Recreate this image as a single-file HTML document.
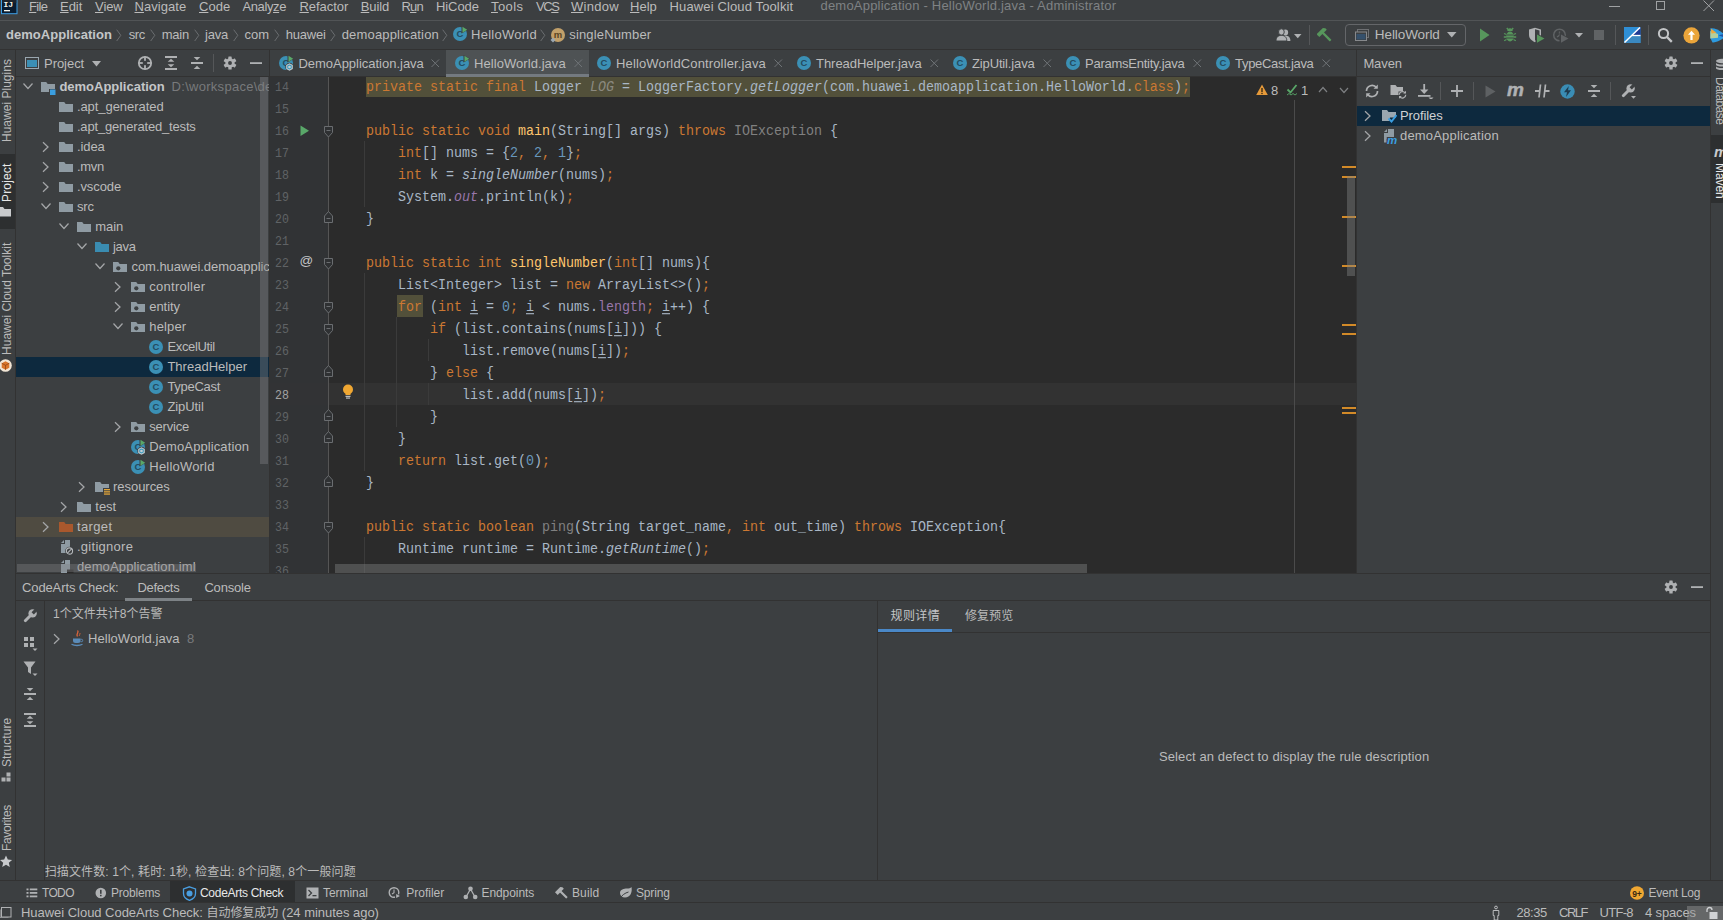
<!DOCTYPE html><html><head><meta charset="utf-8"><title>demoApplication - HelloWorld.java</title><style>html,body{margin:0;padding:0}body{width:1723px;height:920px;overflow:hidden;position:relative;background:#3c3f41;font-family:"Liberation Sans","Noto Sans CJK SC",sans-serif;font-size:13px;color:#bbbbbb;-webkit-font-smoothing:antialiased}svg{display:block;overflow:hidden}span{display:block}span span{display:inline}u{text-decoration:underline}</style></head><body><svg style="position:absolute;left:0px;top:0px;" width="19" height="15" viewBox="0 0 19 15"><rect x="1.500" y="-3" width="15.500" height="16.700" fill="#0a1c30" stroke="#3c9fe6" stroke-width="1"/><rect x="2" y="-3" width="14.500" height="6" fill="#2a2a2c" opacity="0.600"/><text x="3.500" y="6.500" font-family="Liberation Mono,monospace" font-size="8" font-weight="bold" fill="#f4f4ec">IJ</text><rect x="4" y="10" width="6" height="1.300" fill="#f4f4ec"/></svg>
<span id="t1" style="position:absolute;left:29px;top:-2.5px;height:18px;line-height:18px;font-size:13px;color:#bbbbbb;white-space:pre;letter-spacing:-0.648px;text-underline-offset:1px;"><u>F</u>ile</span>
<span id="t2" style="position:absolute;left:60px;top:-2.5px;height:18px;line-height:18px;font-size:13px;color:#bbbbbb;white-space:pre;letter-spacing:-0.059px;text-underline-offset:1px;"><u>E</u>dit</span>
<span id="t3" style="position:absolute;left:95px;top:-2.5px;height:18px;line-height:18px;font-size:13px;color:#bbbbbb;white-space:pre;letter-spacing:-0.072px;text-underline-offset:1px;"><u>V</u>iew</span>
<span id="t4" style="position:absolute;left:134.5px;top:-2.5px;height:18px;line-height:18px;font-size:13px;color:#bbbbbb;white-space:pre;letter-spacing:0.052px;text-underline-offset:1px;"><u>N</u>avigate</span>
<span id="t5" style="position:absolute;left:199px;top:-2.5px;height:18px;line-height:18px;font-size:13px;color:#bbbbbb;white-space:pre;letter-spacing:0.030px;text-underline-offset:1px;"><u>C</u>ode</span>
<span id="t6" style="position:absolute;left:242.5px;top:-2.5px;height:18px;line-height:18px;font-size:13px;color:#bbbbbb;white-space:pre;letter-spacing:-0.395px;text-underline-offset:1px;">Analy<u>z</u>e</span>
<span id="t7" style="position:absolute;left:299.5px;top:-2.5px;height:18px;line-height:18px;font-size:13px;color:#bbbbbb;white-space:pre;letter-spacing:-0.059px;text-underline-offset:1px;"><u>R</u>efactor</span>
<span id="t8" style="position:absolute;left:360.7px;top:-2.5px;height:18px;line-height:18px;font-size:13px;color:#bbbbbb;white-space:pre;letter-spacing:-0.094px;text-underline-offset:1px;"><u>B</u>uild</span>
<span id="t9" style="position:absolute;left:401.5px;top:-2.5px;height:18px;line-height:18px;font-size:13px;color:#bbbbbb;white-space:pre;letter-spacing:-0.864px;text-underline-offset:1px;">R<u>u</u>n</span>
<span id="t10" style="position:absolute;left:436px;top:-2.5px;height:18px;line-height:18px;font-size:13px;color:#bbbbbb;white-space:pre;letter-spacing:-0.084px;text-underline-offset:1px;">HiCode</span>
<span id="t11" style="position:absolute;left:491px;top:-2.5px;height:18px;line-height:18px;font-size:13px;color:#bbbbbb;white-space:pre;letter-spacing:0.409px;text-underline-offset:1px;"><u>T</u>ools</span>
<span id="t12" style="position:absolute;left:536px;top:-2.5px;height:18px;line-height:18px;font-size:13px;color:#bbbbbb;white-space:pre;letter-spacing:-1.414px;text-underline-offset:1px;">VC<u>S</u></span>
<span id="t13" style="position:absolute;left:571px;top:-2.5px;height:18px;line-height:18px;font-size:13px;color:#bbbbbb;white-space:pre;letter-spacing:0.264px;text-underline-offset:1px;"><u>W</u>indow</span>
<span id="t14" style="position:absolute;left:630px;top:-2.5px;height:18px;line-height:18px;font-size:13px;color:#bbbbbb;white-space:pre;letter-spacing:0.014px;text-underline-offset:1px;"><u>H</u>elp</span>
<span id="t15" style="position:absolute;left:669.6px;top:-2.5px;height:18px;line-height:18px;font-size:13px;color:#bbbbbb;white-space:pre;letter-spacing:0.125px;text-underline-offset:1px;">Huawei Cloud Toolkit</span>
<span id="t16" style="position:absolute;left:820.5px;top:-3.0px;height:18px;line-height:18px;font-size:13px;color:#7f8284;white-space:pre;letter-spacing:0.202px;">demoApplication - HelloWorld.java - Administrator</span>
<div style="position:absolute;left:1609px;top:6px;width:11px;height:1px;background:#a0a2a4;"></div>
<div style="position:absolute;left:1656px;top:1px;width:9px;height:9px;border:1px solid #a0a2a4;box-sizing:border-box"></div>
<svg style="position:absolute;left:1703px;top:0px;" width="12" height="12" viewBox="0 0 12 12"><path d="M0.5 0.5L11 11M11 0.5L0.5 11" stroke="#a0a2a4" stroke-width="1" fill="none"/></svg>
<div style="position:absolute;left:0px;top:20px;width:1723px;height:1px;background:#515456;"></div>
<span id="t17" style="position:absolute;left:6px;top:25.5px;height:18px;line-height:18px;font-size:13px;color:#c4c6c8;white-space:pre;font-weight:bold;letter-spacing:0.031px;">demoApplication</span>
<svg style="position:absolute;left:116px;top:29px;" width="6" height="13" viewBox="0 0 6 13"><path d="M0.700 0.700L4.800 6.300L0.700 12" fill="none" stroke="#6a6d70" stroke-width="1"/></svg>
<svg style="position:absolute;left:149.5px;top:29px;" width="6" height="13" viewBox="0 0 6 13"><path d="M0.700 0.700L4.800 6.300L0.700 12" fill="none" stroke="#6a6d70" stroke-width="1"/></svg>
<svg style="position:absolute;left:193.5px;top:29px;" width="6" height="13" viewBox="0 0 6 13"><path d="M0.700 0.700L4.800 6.300L0.700 12" fill="none" stroke="#6a6d70" stroke-width="1"/></svg>
<svg style="position:absolute;left:233px;top:29px;" width="6" height="13" viewBox="0 0 6 13"><path d="M0.700 0.700L4.800 6.300L0.700 12" fill="none" stroke="#6a6d70" stroke-width="1"/></svg>
<svg style="position:absolute;left:274px;top:29px;" width="6" height="13" viewBox="0 0 6 13"><path d="M0.700 0.700L4.800 6.300L0.700 12" fill="none" stroke="#6a6d70" stroke-width="1"/></svg>
<svg style="position:absolute;left:330px;top:29px;" width="6" height="13" viewBox="0 0 6 13"><path d="M0.700 0.700L4.800 6.300L0.700 12" fill="none" stroke="#6a6d70" stroke-width="1"/></svg>
<svg style="position:absolute;left:442px;top:29px;" width="6" height="13" viewBox="0 0 6 13"><path d="M0.700 0.700L4.800 6.300L0.700 12" fill="none" stroke="#6a6d70" stroke-width="1"/></svg>
<svg style="position:absolute;left:540px;top:29px;" width="6" height="13" viewBox="0 0 6 13"><path d="M0.700 0.700L4.800 6.300L0.700 12" fill="none" stroke="#6a6d70" stroke-width="1"/></svg>
<span id="t18" style="position:absolute;left:128.7px;top:25.5px;height:18px;line-height:18px;font-size:13px;color:#bbbbbb;white-space:pre;letter-spacing:-0.337px;">src</span>
<span id="t19" style="position:absolute;left:161.7px;top:25.5px;height:18px;line-height:18px;font-size:13px;color:#bbbbbb;white-space:pre;letter-spacing:-0.196px;">main</span>
<span id="t20" style="position:absolute;left:205px;top:25.5px;height:18px;line-height:18px;font-size:13px;color:#bbbbbb;white-space:pre;letter-spacing:-0.188px;">java</span>
<span id="t21" style="position:absolute;left:244.5px;top:25.5px;height:18px;line-height:18px;font-size:13px;color:#bbbbbb;white-space:pre;letter-spacing:0.055px;">com</span>
<span id="t22" style="position:absolute;left:285.7px;top:25.5px;height:18px;line-height:18px;font-size:13px;color:#bbbbbb;white-space:pre;letter-spacing:-0.219px;">huawei</span>
<span id="t23" style="position:absolute;left:341.7px;top:25.5px;height:18px;line-height:18px;font-size:13px;color:#bbbbbb;white-space:pre;letter-spacing:0.173px;">demoapplication</span>
<svg style="position:absolute;left:452px;top:26px;" width="16" height="16" viewBox="0 0 16 16"><circle cx="8" cy="8" r="7" fill="#3b90b5"/><text x="8" y="11.3" text-anchor="middle" font-family="Liberation Sans,sans-serif" font-size="9.5" font-weight="bold" fill="#234b60">C</text><path d="M9.5 0L16 3.8L9.5 7.6z" fill="#3c3f41"/><path d="M10.5 0.8L15.2 3.8L10.5 6.8z" fill="#59a869"/></svg>
<span id="t24" style="position:absolute;left:471px;top:25.5px;height:18px;line-height:18px;font-size:13px;color:#bbbbbb;white-space:pre;letter-spacing:0.259px;">HelloWorld</span>
<svg style="position:absolute;left:550px;top:27px;" width="16" height="16" viewBox="0 0 16 16"><circle cx="8" cy="8" r="7" fill="#c2a06a"/><text x="8" y="11" text-anchor="middle" font-family="Liberation Sans,sans-serif" font-size="9.5" font-weight="bold" fill="#5a4422">m</text><path d="M0.5 13l2.5-2.5l2.5 2.5l-2.5 2.5z" fill="#9aa7b0"/></svg>
<span id="t25" style="position:absolute;left:569.3px;top:25.5px;height:18px;line-height:18px;font-size:13px;color:#bbbbbb;white-space:pre;letter-spacing:0.148px;">singleNumber</span>
<div style="position:absolute;left:0px;top:49px;width:1723px;height:1px;background:#323232;"></div>
<svg style="position:absolute;left:1276px;top:27px;" width="15" height="16" viewBox="0 0 15 16"><g fill="#afb1b3" transform="scale(0.900 1)"><circle cx="10.5" cy="5.5" r="3"/><path d="M5 14c0-4 2.5-5.2 5.5-5.2S16 10 16 14z"/><circle cx="6" cy="5" r="3.2" stroke="#3c3f41" stroke-width="1"/><path d="M0 14c0-4.2 2.7-5.6 6-5.6s6 1.4 6 5.6z" stroke="#3c3f41" stroke-width="1"/></g></svg>
<svg style="position:absolute;left:1293.5px;top:33.5px;" width="8" height="5" viewBox="0 0 8 5"><path d="M0 0h7.500L3.750 4.200z" fill="#afb1b3"/></svg>
<div style="position:absolute;left:1309px;top:25px;width:1px;height:20px;background:#555759;"></div>
<svg style="position:absolute;left:1317px;top:27px;" width="17" height="16" viewBox="0 0 17 16"><g transform="rotate(-45 8 8)" fill="#57965c"><rect x="6.800" y="4" width="2.400" height="12" rx="0.500"/><path d="M2.500 1.500h9l1.500 2v2h-10.500z"/></g></svg>
<div style="position:absolute;left:1345px;top:24px;width:121px;height:22px;border:1px solid #646669;border-radius:4px;box-sizing:border-box"></div>
<svg style="position:absolute;left:1354px;top:27px;" width="16" height="16" viewBox="0 0 16 16"><rect x="3.5" y="2.5" width="11" height="8" fill="none" stroke="#6e7073" stroke-width="1"/><rect x="1.5" y="5" width="11" height="8.5" fill="#3c3f41" stroke="#87898c" stroke-width="1"/><rect x="2.5" y="7" width="9" height="5.5" fill="#35506b"/></svg>
<span id="t26" style="position:absolute;left:1374.8px;top:26.0px;height:18px;line-height:18px;font-size:13.5px;color:#bbbbbb;white-space:pre;letter-spacing:-0.082px;">HelloWorld</span>
<svg style="position:absolute;left:1447px;top:32px;" width="10" height="6" viewBox="0 0 10 6"><path d="M0 0h9.5L4.75 5.5z" fill="#afb1b3"/></svg>
<svg style="position:absolute;left:1479px;top:28px;" width="12" height="14" viewBox="0 0 12 14"><path d="M1 0.500L10.500 7L1 13.500z" fill="#57965c"/></svg>
<svg style="position:absolute;left:1502px;top:27px;" width="16" height="16" viewBox="0 0 16 16"><g fill="#57965c"><ellipse cx="8" cy="9.500" rx="3.800" ry="5"/><path d="M5.300 4a2.700 2.700 0 0 1 5.400 0z"/><g stroke="#57965c" stroke-width="1.300" fill="none"><path d="M4.500 7.500L2 6.500M4.500 10H1.800M4.500 12.500L2.200 13.800M11.500 7.500l2.500-1M11.500 10h2.700M11.500 12.500l2.300 1.300M6 2.500L4.800 1M10 2.500L11.200 1"/></g></g><path d="M4.500 8h7M4.500 11h7" stroke="#3c3f41" stroke-width="0.900"/></svg>
<svg style="position:absolute;left:1528px;top:27px;" width="17" height="16" viewBox="0 0 17 16"><path d="M1 2.500L7 0.800L13 2.500V8c0 3.500-3 6-6 7.200C4 14 1 11.500 1 8z" fill="#afb1b3"/><path d="M7 2.200V13.500C9.500 12.400 11.500 10.500 11.500 8V3.500z" fill="#3c3f41"/><path d="M7.500 5.500L17.500 11.200L7.500 17z" fill="#3c3f41"/><path d="M9 7.500L16.500 11.500L9 15.800z" fill="#57965c"/></svg>
<svg style="position:absolute;left:1552px;top:27px;" width="17" height="16" viewBox="0 0 17 16"><circle cx="7.500" cy="8" r="5.800" fill="none" stroke="#606365" stroke-width="1.500"/><path d="M7.500 4.500V8.300L5 10" fill="none" stroke="#606365" stroke-width="1.300"/><path d="M7.500 5.500L17.500 11.200L7.500 17z" fill="#3c3f41"/><path d="M9 7.500L16.500 11.500L9 15.800z" fill="#606365"/></svg>
<svg style="position:absolute;left:1575px;top:33px;" width="8" height="5" viewBox="0 0 8 5"><path d="M0 0h8L4 4.500z" fill="#afb1b3"/></svg>
<div style="position:absolute;left:1594px;top:30px;width:10px;height:10px;background:#606365;"></div>
<div style="position:absolute;left:1615px;top:25px;width:1px;height:20px;background:#555759;"></div>
<svg style="position:absolute;left:1623.5px;top:27px;" width="17" height="16" viewBox="0 0 17 16"><rect width="16.500" height="16" fill="#2f8fd6"/><path d="M16.500 0V9H7.200z" fill="#1f3a93"/><path d="M7.200 9H16.500V16H0z" fill="#3a88c0"/><path d="M0.500 15.500L16 0.500" stroke="#ffffff" stroke-width="1.500"/><path d="M8 8.500h8.500" stroke="#ffffff" stroke-width="1.300"/></svg>
<div style="position:absolute;left:1648px;top:25px;width:1px;height:20px;background:#555759;"></div>
<svg style="position:absolute;left:1657px;top:27px;" width="16" height="16" viewBox="0 0 16 16"><circle cx="6.500" cy="6.500" r="4.600" fill="none" stroke="#c3c5c7" stroke-width="2"/><path d="M10 10l4.800 4.800" stroke="#c3c5c7" stroke-width="2.400"/></svg>
<svg style="position:absolute;left:1682.5px;top:26.5px;" width="17" height="17" viewBox="0 0 17 17"><circle cx="8.500" cy="8.400" r="8.100" fill="#eba53a"/><path d="M8.500 3.800L12 7.800H9.600V13H7.400V7.800H5z" fill="#ffffff"/></svg>
<svg style="position:absolute;left:1709.5px;top:27.5px;" width="14" height="15" viewBox="0 0 14 15"><path d="M0.500 0.300C5 0 10 2.500 14 6V10C10 12.500 6 15 2.500 14.500L0.300 10z" fill="#2d9ae0"/><path d="M0.300 3L8 6V9.800L0.300 10.500z" fill="#b4cf9c"/><path d="M0.800 0.600L6.500 4.800L1.500 5.500z" fill="#f0a93a"/><path d="M8.500 7.300L14 6V9.500z" fill="#1f4fa0"/></svg>
<div style="position:absolute;left:15px;top:50px;width:1px;height:830px;background:#323232;"></div>
<span id="t27" style="position:absolute;left:-2.5px;top:141.7px;transform-origin:0 0;transform:rotate(-90deg);height:18px;line-height:18px;font-size:12px;color:#bbbbbb;white-space:pre;letter-spacing:0.013px;">Huawei Plugins</span>
<div style="position:absolute;left:0px;top:154px;width:15px;height:75px;background:#2d2f30;"></div>
<span id="t28" style="position:absolute;left:-2.5px;top:201.7px;transform-origin:0 0;transform:rotate(-90deg);height:18px;line-height:18px;font-size:12px;color:#e8e8e8;white-space:pre;letter-spacing:0.160px;">Project</span>
<svg style="position:absolute;left:0px;top:206px;" width="12" height="11" viewBox="0 0 12 11"><path d="M-3 1h6l1.500 2H11v7.500H-3z" fill="#c8cacc"/></svg>
<span id="t29" style="position:absolute;left:-2.5px;top:354.5px;transform-origin:0 0;transform:rotate(-90deg);height:18px;line-height:18px;font-size:12px;color:#bbbbbb;white-space:pre;letter-spacing:0.023px;">Huawei Cloud Toolkit</span>
<svg style="position:absolute;left:0px;top:358.5px;" width="13" height="13" viewBox="0 0 13 13"><circle cx="5.500" cy="6.500" r="6.300" fill="#f2e6d6"/><path d="M5.500 2.200l3.800 2v4.600l-3.800 2l-3.800-2V4.200z" fill="#d9752b"/><path d="M5.500 6.300V10.800M1.700 4.200L5.500 6.300L9.300 4.200" stroke="#8a3e10" stroke-width="0.700" fill="none"/></svg>
<span id="t30" style="position:absolute;left:-2.5px;top:767px;transform-origin:0 0;transform:rotate(-90deg);height:18px;line-height:18px;font-size:12px;color:#bbbbbb;white-space:pre;letter-spacing:0.060px;">Structure</span>
<svg style="position:absolute;left:1px;top:772px;" width="11" height="11" viewBox="0 0 11 11"><g fill="#afb1b3"><rect x="5.500" y="0.500" width="4" height="4"/><rect x="0.500" y="5.500" width="4" height="4"/><rect x="5.500" y="5.500" width="4" height="4"/></g></svg>
<span id="t31" style="position:absolute;left:-2.5px;top:851px;transform-origin:0 0;transform:rotate(-90deg);height:18px;line-height:18px;font-size:12px;color:#bbbbbb;white-space:pre;letter-spacing:-0.372px;">Favorites</span>
<svg style="position:absolute;left:0px;top:855px;" width="13" height="13" viewBox="0 0 13 13"><path d="M6 0.500l1.800 4l4.300 0.400l-3.300 2.900l1 4.200L6 9.800L2.200 12l1-4.200L-0.100 4.900l4.300-0.400z" fill="#c8cacc"/></svg>
<div style="position:absolute;left:1710px;top:50px;width:1px;height:830px;background:#323232;"></div>
<svg style="position:absolute;left:1715px;top:58px;" width="12" height="14" viewBox="0 0 12 14"><g fill="#afb1b3"><ellipse cx="7" cy="3" rx="6" ry="2.200"/><path d="M1 4.500c0 2.800 12 2.800 12 0v2c0 2.800-12 2.800-12 0zM1 8c0 2.800 12 2.800 12 0v2c0 2.800-12 2.800-12 0z"/></g></svg>
<span id="t32" style="position:absolute;left:1728.5px;top:77px;transform-origin:0 0;transform:rotate(90deg);height:18px;line-height:18px;font-size:12px;color:#bbbbbb;white-space:pre;letter-spacing:-0.490px;">Database</span>
<div style="position:absolute;left:1711px;top:135px;width:12px;height:68px;background:#2d2f30;"></div>
<span style="position:absolute;left:1714px;top:142.500px;font-size:15px;line-height:18px;font-weight:bold;font-style:italic;color:#c8cacc">m</span>
<span id="t33" style="position:absolute;left:1728.5px;top:163px;transform-origin:0 0;transform:rotate(90deg);height:18px;line-height:18px;font-size:12px;color:#e8e8e8;white-space:pre;letter-spacing:-0.074px;">Maven</span>
<svg style="position:absolute;left:24px;top:55px;" width="16" height="16" viewBox="0 0 16 16"><rect x="1.500" y="2.500" width="13" height="11" fill="#3c3f41" stroke="#9aa7b0" stroke-width="1"/><rect x="3" y="5" width="10" height="7" fill="#3b8fb5"/></svg>
<span id="t34" style="position:absolute;left:44px;top:54.5px;height:18px;line-height:18px;font-size:13px;color:#bbbbbb;white-space:pre;letter-spacing:-0.041px;">Project</span>
<svg style="position:absolute;left:92px;top:61px;" width="9" height="6" viewBox="0 0 9 6"><path d="M0 0h9L4.500 5.500z" fill="#afb1b3"/></svg>
<svg style="position:absolute;left:137px;top:55px;" width="16" height="16" viewBox="0 0 16 16"><circle cx="8" cy="8" r="6.200" fill="none" stroke="#afb1b3" stroke-width="1.800"/><g fill="#afb1b3"><rect x="7.100" y="1.500" width="1.800" height="4.300"/><rect x="7.100" y="10.200" width="1.800" height="4.300"/><rect x="1.500" y="7.100" width="4.300" height="1.800"/><rect x="10.200" y="7.100" width="4.300" height="1.800"/></g></svg>
<svg style="position:absolute;left:163px;top:55px;" width="16" height="16" viewBox="0 0 16 16"><g fill="#afb1b3"><rect x="2" y="1" width="12" height="2"/><rect x="2" y="13" width="12" height="2"/><path d="M8 3.800l3.300 3H4.700z"/><path d="M8 12.200l3.300-3H4.700z"/></g></svg>
<svg style="position:absolute;left:189px;top:55px;" width="16" height="16" viewBox="0 0 16 16"><g fill="#afb1b3"><rect x="2" y="7" width="12" height="2"/><path d="M8 5.300l3.300-3.300H4.700z"/><path d="M8 10.700l3.300 3.300H4.700z"/></g></svg>
<div style="position:absolute;left:213px;top:54px;width:1px;height:18px;background:#555759;"></div>
<svg style="position:absolute;left:222px;top:55px;" width="16" height="16" viewBox="0 0 16 16"><g transform="translate(8 8) scale(0.930) translate(-8 -8)"><g fill="#afb1b3"><circle cx="8" cy="8" r="5"/><rect x="6.200" y="1" width="3.600" height="3.600" rx="0.600" transform="rotate(0 8 8)"/><rect x="6.200" y="1" width="3.600" height="3.600" rx="0.600" transform="rotate(60 8 8)"/><rect x="6.200" y="1" width="3.600" height="3.600" rx="0.600" transform="rotate(120 8 8)"/><rect x="6.200" y="1" width="3.600" height="3.600" rx="0.600" transform="rotate(180 8 8)"/><rect x="6.200" y="1" width="3.600" height="3.600" rx="0.600" transform="rotate(240 8 8)"/><rect x="6.200" y="1" width="3.600" height="3.600" rx="0.600" transform="rotate(300 8 8)"/></g><circle cx="8" cy="8" r="2.100" fill="#3c3f41"/></g></svg>
<svg style="position:absolute;left:248px;top:55px;" width="16" height="16" viewBox="0 0 16 16"><rect x="2" y="7.200" width="12" height="1.800" fill="#afb1b3"/></svg>
<div style="position:absolute;left:16px;top:76px;width:253px;height:1px;background:#323232;"></div>
<div style="position:absolute;left:269px;top:50px;width:1px;height:524px;background:#323232;"></div>
<div style="position:absolute;left:16px;top:77px;width:253px;height:497px;overflow:hidden">
<svg style="position:absolute;left:3.5px;top:1.2px;" width="16" height="16" viewBox="0 0 16 16"><path d="M3.500 5.500L8 10.500L12.500 5.500" fill="none" stroke="#a4a6a8" stroke-width="1.250"/></svg>
<svg style="position:absolute;left:23.9px;top:2px;" width="16" height="16" viewBox="0 0 16 16"><path d="M1 3h5.2l1.5 2H15v5H9v3H1z" fill="#8f9ba3"/><rect x="10" y="10.5" width="5.5" height="5.5" fill="#3a9ee0"/></svg>
<span id="t35" style="position:absolute;left:43.4px;top:0.5px;height:18px;line-height:18px;font-size:13px;color:#c4c6c8;white-space:pre;font-weight:bold;letter-spacing:-0.011px;">demoApplication</span>
<span id="t36" style="position:absolute;left:155.6px;top:0.5px;height:18px;line-height:18px;font-size:13px;color:#787a7c;white-space:pre;letter-spacing:0.281px;">D:\workspace\demoApplication</span>
<svg style="position:absolute;left:41.900000000000006px;top:22px;" width="16" height="16" viewBox="0 0 16 16"><path d="M1 3h5.2l1.5 2H15v8H1z" fill="#8f9ba3"/></svg>
<span id="t37" style="position:absolute;left:60.900000000000006px;top:20.5px;height:18px;line-height:18px;font-size:13px;color:#bbbbbb;white-space:pre;letter-spacing:-0.057px;">.apt_generated</span>
<svg style="position:absolute;left:41.900000000000006px;top:42px;" width="16" height="16" viewBox="0 0 16 16"><path d="M1 3h5.2l1.5 2H15v8H1z" fill="#8f9ba3"/></svg>
<span id="t38" style="position:absolute;left:60.900000000000006px;top:40.5px;height:18px;line-height:18px;font-size:13px;color:#bbbbbb;white-space:pre;letter-spacing:-0.167px;">.apt_generated_tests</span>
<svg style="position:absolute;left:21.6px;top:61.8px;" width="16" height="16" viewBox="0 0 16 16"><path d="M5 3.300L10 8L5 12.700" fill="none" stroke="#a4a6a8" stroke-width="1.250"/></svg>
<svg style="position:absolute;left:41.900000000000006px;top:62px;" width="16" height="16" viewBox="0 0 16 16"><path d="M1 3h5.2l1.5 2H15v8H1z" fill="#8f9ba3"/></svg>
<span id="t39" style="position:absolute;left:60.900000000000006px;top:60.5px;height:18px;line-height:18px;font-size:13px;color:#bbbbbb;white-space:pre;letter-spacing:-0.067px;">.idea</span>
<svg style="position:absolute;left:21.6px;top:81.8px;" width="16" height="16" viewBox="0 0 16 16"><path d="M5 3.300L10 8L5 12.700" fill="none" stroke="#a4a6a8" stroke-width="1.250"/></svg>
<svg style="position:absolute;left:41.900000000000006px;top:82px;" width="16" height="16" viewBox="0 0 16 16"><path d="M1 3h5.2l1.5 2H15v8H1z" fill="#8f9ba3"/></svg>
<span id="t40" style="position:absolute;left:60.900000000000006px;top:80.5px;height:18px;line-height:18px;font-size:13px;color:#bbbbbb;white-space:pre;letter-spacing:-0.249px;">.mvn</span>
<svg style="position:absolute;left:21.6px;top:101.8px;" width="16" height="16" viewBox="0 0 16 16"><path d="M5 3.300L10 8L5 12.700" fill="none" stroke="#a4a6a8" stroke-width="1.250"/></svg>
<svg style="position:absolute;left:41.900000000000006px;top:102px;" width="16" height="16" viewBox="0 0 16 16"><path d="M1 3h5.2l1.5 2H15v8H1z" fill="#8f9ba3"/></svg>
<span id="t41" style="position:absolute;left:60.900000000000006px;top:100.5px;height:18px;line-height:18px;font-size:13px;color:#bbbbbb;white-space:pre;letter-spacing:-0.079px;">.vscode</span>
<svg style="position:absolute;left:21.5px;top:121.2px;" width="16" height="16" viewBox="0 0 16 16"><path d="M3.500 5.500L8 10.500L12.500 5.500" fill="none" stroke="#a4a6a8" stroke-width="1.250"/></svg>
<svg style="position:absolute;left:41.900000000000006px;top:122px;" width="16" height="16" viewBox="0 0 16 16"><path d="M1 3h5.2l1.5 2H15v8H1z" fill="#8f9ba3"/></svg>
<span id="t42" style="position:absolute;left:60.900000000000006px;top:120.5px;height:18px;line-height:18px;font-size:13px;color:#bbbbbb;white-space:pre;letter-spacing:-0.058px;">src</span>
<svg style="position:absolute;left:39.5px;top:141.2px;" width="16" height="16" viewBox="0 0 16 16"><path d="M3.500 5.500L8 10.500L12.500 5.500" fill="none" stroke="#a4a6a8" stroke-width="1.250"/></svg>
<svg style="position:absolute;left:60.3px;top:142px;" width="16" height="16" viewBox="0 0 16 16"><path d="M1 3h5.2l1.5 2H15v8H1z" fill="#8f9ba3"/></svg>
<span id="t43" style="position:absolute;left:79.3px;top:140.5px;height:18px;line-height:18px;font-size:13px;color:#bbbbbb;white-space:pre;letter-spacing:-0.082px;">main</span>
<svg style="position:absolute;left:57.5px;top:161.2px;" width="16" height="16" viewBox="0 0 16 16"><path d="M3.500 5.500L8 10.500L12.500 5.500" fill="none" stroke="#a4a6a8" stroke-width="1.250"/></svg>
<svg style="position:absolute;left:78px;top:162px;" width="16" height="16" viewBox="0 0 16 16"><path d="M1 3h5.2l1.5 2H15v8H1z" fill="#3a8cb1"/></svg>
<span id="t44" style="position:absolute;left:97px;top:160.5px;height:18px;line-height:18px;font-size:13px;color:#bbbbbb;white-space:pre;letter-spacing:-0.274px;">java</span>
<svg style="position:absolute;left:75.5px;top:181.2px;" width="16" height="16" viewBox="0 0 16 16"><path d="M3.500 5.500L8 10.500L12.500 5.500" fill="none" stroke="#a4a6a8" stroke-width="1.250"/></svg>
<svg style="position:absolute;left:96.0px;top:182px;" width="16" height="16" viewBox="0 0 16 16"><path d="M1 3h5.2l1.5 2H15v8H1z" fill="#8f9ba3"/><circle cx="6.300" cy="9.300" r="2.100" fill="#3c3f41"/></svg>
<span id="t45" style="position:absolute;left:115.5px;top:180.5px;height:18px;line-height:18px;font-size:13px;color:#bbbbbb;white-space:pre;letter-spacing:-0.057px;">com.huawei.demoapplication</span>
<svg style="position:absolute;left:93.6px;top:201.8px;" width="16" height="16" viewBox="0 0 16 16"><path d="M5 3.300L10 8L5 12.700" fill="none" stroke="#a4a6a8" stroke-width="1.250"/></svg>
<svg style="position:absolute;left:114.30000000000001px;top:202px;" width="16" height="16" viewBox="0 0 16 16"><path d="M1 3h5.2l1.5 2H15v8H1z" fill="#8f9ba3"/><circle cx="6.300" cy="9.300" r="2.100" fill="#3c3f41"/></svg>
<span id="t46" style="position:absolute;left:133.3px;top:200.5px;height:18px;line-height:18px;font-size:13px;color:#bbbbbb;white-space:pre;letter-spacing:0.256px;">controller</span>
<svg style="position:absolute;left:93.6px;top:221.8px;" width="16" height="16" viewBox="0 0 16 16"><path d="M5 3.300L10 8L5 12.700" fill="none" stroke="#a4a6a8" stroke-width="1.250"/></svg>
<svg style="position:absolute;left:114.30000000000001px;top:222px;" width="16" height="16" viewBox="0 0 16 16"><path d="M1 3h5.2l1.5 2H15v8H1z" fill="#8f9ba3"/><circle cx="6.300" cy="9.300" r="2.100" fill="#3c3f41"/></svg>
<span id="t47" style="position:absolute;left:133.3px;top:220.5px;height:18px;line-height:18px;font-size:13px;color:#bbbbbb;white-space:pre;letter-spacing:-0.069px;">entity</span>
<svg style="position:absolute;left:93.5px;top:241.2px;" width="16" height="16" viewBox="0 0 16 16"><path d="M3.500 5.500L8 10.500L12.500 5.500" fill="none" stroke="#a4a6a8" stroke-width="1.250"/></svg>
<svg style="position:absolute;left:114.30000000000001px;top:242px;" width="16" height="16" viewBox="0 0 16 16"><path d="M1 3h5.2l1.5 2H15v8H1z" fill="#8f9ba3"/><circle cx="6.300" cy="9.300" r="2.100" fill="#3c3f41"/></svg>
<span id="t48" style="position:absolute;left:133.3px;top:240.5px;height:18px;line-height:18px;font-size:13px;color:#bbbbbb;white-space:pre;letter-spacing:0.138px;">helper</span>
<svg style="position:absolute;left:132.4px;top:262px;" width="16" height="16" viewBox="0 0 16 16"><circle cx="8" cy="8" r="7" fill="#3b90b5"/><text x="8" y="11.3" text-anchor="middle" font-family="Liberation Sans,sans-serif" font-size="9.5" font-weight="bold" fill="#234b60">C</text></svg>
<span id="t49" style="position:absolute;left:151.4px;top:260.5px;height:18px;line-height:18px;font-size:13px;color:#bbbbbb;white-space:pre;letter-spacing:-0.339px;">ExcelUtil</span>
<div style="position:absolute;left:0px;top:280px;width:253px;height:20px;background:#0d293e;"></div>
<svg style="position:absolute;left:132.4px;top:282px;" width="16" height="16" viewBox="0 0 16 16"><circle cx="8" cy="8" r="7" fill="#3b90b5"/><text x="8" y="11.3" text-anchor="middle" font-family="Liberation Sans,sans-serif" font-size="9.5" font-weight="bold" fill="#234b60">C</text></svg>
<span id="t50" style="position:absolute;left:151.4px;top:280.5px;height:18px;line-height:18px;font-size:13px;color:#bbbbbb;white-space:pre;letter-spacing:0.009px;">ThreadHelper</span>
<svg style="position:absolute;left:132.4px;top:302px;" width="16" height="16" viewBox="0 0 16 16"><circle cx="8" cy="8" r="7" fill="#3b90b5"/><text x="8" y="11.3" text-anchor="middle" font-family="Liberation Sans,sans-serif" font-size="9.5" font-weight="bold" fill="#234b60">C</text></svg>
<span id="t51" style="position:absolute;left:151.4px;top:300.5px;height:18px;line-height:18px;font-size:13px;color:#bbbbbb;white-space:pre;letter-spacing:-0.283px;">TypeCast</span>
<svg style="position:absolute;left:132.4px;top:322px;" width="16" height="16" viewBox="0 0 16 16"><circle cx="8" cy="8" r="7" fill="#3b90b5"/><text x="8" y="11.3" text-anchor="middle" font-family="Liberation Sans,sans-serif" font-size="9.5" font-weight="bold" fill="#234b60">C</text></svg>
<span id="t52" style="position:absolute;left:151.4px;top:320.5px;height:18px;line-height:18px;font-size:13px;color:#bbbbbb;white-space:pre;letter-spacing:-0.068px;">ZipUtil</span>
<svg style="position:absolute;left:93.6px;top:341.8px;" width="16" height="16" viewBox="0 0 16 16"><path d="M5 3.300L10 8L5 12.700" fill="none" stroke="#a4a6a8" stroke-width="1.250"/></svg>
<svg style="position:absolute;left:114.30000000000001px;top:342px;" width="16" height="16" viewBox="0 0 16 16"><path d="M1 3h5.2l1.5 2H15v8H1z" fill="#8f9ba3"/><circle cx="6.300" cy="9.300" r="2.100" fill="#3c3f41"/></svg>
<span id="t53" style="position:absolute;left:133.3px;top:340.5px;height:18px;line-height:18px;font-size:13px;color:#bbbbbb;white-space:pre;letter-spacing:-0.213px;">service</span>
<svg style="position:absolute;left:114.30000000000001px;top:362px;" width="16" height="16" viewBox="0 0 16 16"><circle cx="8" cy="8" r="7" fill="#3b90b5"/><text x="8" y="11.3" text-anchor="middle" font-family="Liberation Sans,sans-serif" font-size="9.5" font-weight="bold" fill="#234b60">C</text><path d="M9.5 0L16 3.8L9.5 7.6z" fill="#3c3f41"/><path d="M10.5 0.8L15.2 3.8L10.5 6.8z" fill="#59a869"/><circle cx="11.5" cy="12" r="4.2" fill="#3c3f41"/><path d="M11.5 8.2l3.3 1.9v3.8l-3.3 1.9l-3.3-1.9v-3.8z" fill="#c4cdd2"/><circle cx="11.5" cy="12" r="1.9" fill="none" stroke="#3e9abc" stroke-width="1.1"/></svg>
<span id="t54" style="position:absolute;left:133.3px;top:360.5px;height:18px;line-height:18px;font-size:13px;color:#bbbbbb;white-space:pre;letter-spacing:0.098px;">DemoApplication</span>
<svg style="position:absolute;left:114.30000000000001px;top:382px;" width="16" height="16" viewBox="0 0 16 16"><circle cx="8" cy="8" r="7" fill="#3b90b5"/><text x="8" y="11.3" text-anchor="middle" font-family="Liberation Sans,sans-serif" font-size="9.5" font-weight="bold" fill="#234b60">C</text><path d="M9.5 0L16 3.8L9.5 7.6z" fill="#3c3f41"/><path d="M10.5 0.8L15.2 3.8L10.5 6.8z" fill="#59a869"/></svg>
<span id="t55" style="position:absolute;left:133.3px;top:380.5px;height:18px;line-height:18px;font-size:13px;color:#bbbbbb;white-space:pre;letter-spacing:0.195px;">HelloWorld</span>
<svg style="position:absolute;left:57.6px;top:401.8px;" width="16" height="16" viewBox="0 0 16 16"><path d="M5 3.300L10 8L5 12.700" fill="none" stroke="#a4a6a8" stroke-width="1.250"/></svg>
<svg style="position:absolute;left:78px;top:402px;" width="16" height="16" viewBox="0 0 16 16"><path d="M1 3h5.2l1.5 2H15v4H9v4H1z" fill="#8f9ba3"/><g fill="#e2a53a"><rect x="10" y="10" width="6" height="1.3"/><rect x="10" y="12.2" width="6" height="1.3"/><rect x="10" y="14.4" width="6" height="1.3"/></g></svg>
<span id="t56" style="position:absolute;left:97px;top:400.5px;height:18px;line-height:18px;font-size:13px;color:#bbbbbb;white-space:pre;letter-spacing:-0.033px;">resources</span>
<svg style="position:absolute;left:39.6px;top:421.8px;" width="16" height="16" viewBox="0 0 16 16"><path d="M5 3.300L10 8L5 12.700" fill="none" stroke="#a4a6a8" stroke-width="1.250"/></svg>
<svg style="position:absolute;left:60.3px;top:422px;" width="16" height="16" viewBox="0 0 16 16"><path d="M1 3h5.2l1.5 2H15v8H1z" fill="#8f9ba3"/></svg>
<span id="t57" style="position:absolute;left:79.3px;top:420.5px;height:18px;line-height:18px;font-size:13px;color:#bbbbbb;white-space:pre;letter-spacing:-0.020px;">test</span>
<div style="position:absolute;left:0px;top:440px;width:253px;height:20px;background:#4f4b41;"></div>
<svg style="position:absolute;left:21.6px;top:441.8px;" width="16" height="16" viewBox="0 0 16 16"><path d="M5 3.300L10 8L5 12.700" fill="none" stroke="#a4a6a8" stroke-width="1.250"/></svg>
<svg style="position:absolute;left:41.900000000000006px;top:442px;" width="16" height="16" viewBox="0 0 16 16"><path d="M1 3h5.2l1.5 2H15v8H1z" fill="#a9582d"/></svg>
<span id="t58" style="position:absolute;left:60.900000000000006px;top:440.5px;height:18px;line-height:18px;font-size:13px;color:#bbbbbb;white-space:pre;letter-spacing:0.373px;">target</span>
<svg style="position:absolute;left:43.900000000000006px;top:462px;" width="16" height="16" viewBox="0 0 16 16"><path d="M5 1h5v13H1V5h4z" fill="#8f9ba3"/><path d="M4 1v3H1z" fill="#8f9ba3"/><circle cx="9.500" cy="12" r="4.300" fill="#3c3f41"/><circle cx="9.500" cy="12" r="3.100" fill="none" stroke="#b4b8bb" stroke-width="1.100"/><path d="M7.400 14.100l4.200-4.200" stroke="#b4b8bb" stroke-width="1.100"/></svg>
<span id="t59" style="position:absolute;left:60.900000000000006px;top:460.5px;height:18px;line-height:18px;font-size:13px;color:#bbbbbb;white-space:pre;letter-spacing:0.286px;">.gitignore</span>
<svg style="position:absolute;left:43.900000000000006px;top:482px;" width="16" height="16" viewBox="0 0 16 16"><path d="M5 1h5v13H1V5h4z" fill="#8f9ba3"/><path d="M4 1v3H1z" fill="#8f9ba3"/><rect x="7" y="10.500" width="6.500" height="4.500" fill="#2b2b2b"/></svg>
<span id="t60" style="position:absolute;left:60.900000000000006px;top:480.5px;height:18px;line-height:18px;font-size:13px;color:#bbbbbb;white-space:pre;letter-spacing:0.138px;">demoApplication.iml</span>
<div style="position:absolute;left:244px;top:0px;width:8px;height:387px;background:rgba(128,130,132,0.400);"></div>
<div style="position:absolute;left:1px;top:487px;width:179px;height:8px;background:rgba(128,130,132,0.380);"></div>
</div>
<div style="position:absolute;left:270px;top:76px;width:1086px;height:1px;background:#323232;"></div>
<svg style="position:absolute;left:278px;top:55px;" width="16" height="16" viewBox="0 0 16 16"><circle cx="8" cy="8" r="7" fill="#3b90b5"/><text x="8" y="11.3" text-anchor="middle" font-family="Liberation Sans,sans-serif" font-size="9.5" font-weight="bold" fill="#234b60">C</text><path d="M9.5 0L16 3.8L9.5 7.6z" fill="#3c3f41"/><path d="M10.5 0.8L15.2 3.8L10.5 6.8z" fill="#59a869"/><circle cx="11.5" cy="12" r="4.2" fill="#3c3f41"/><path d="M11.5 8.2l3.3 1.9v3.8l-3.3 1.9l-3.3-1.9v-3.8z" fill="#c4cdd2"/><circle cx="11.5" cy="12" r="1.9" fill="none" stroke="#3e9abc" stroke-width="1.1"/></svg>
<span id="t61" style="position:absolute;left:298.4px;top:54.5px;height:18px;line-height:18px;font-size:13px;color:#bbbbbb;white-space:pre;letter-spacing:-0.017px;">DemoApplication.java</span>
<svg style="position:absolute;left:431px;top:59px;" width="9" height="9" viewBox="0 0 9 9"><path d="M0.500 0.500L8 8M8 0.500L0.500 8" stroke="#6e7376" stroke-width="1" fill="none"/></svg>
<div style="position:absolute;left:446px;top:50px;width:143px;height:24px;background:#4e5254;"></div>
<div style="position:absolute;left:446px;top:74px;width:143px;height:3px;background:#747a80;"></div>
<svg style="position:absolute;left:454px;top:55px;" width="16" height="16" viewBox="0 0 16 16"><circle cx="8" cy="8" r="7" fill="#3b90b5"/><text x="8" y="11.3" text-anchor="middle" font-family="Liberation Sans,sans-serif" font-size="9.5" font-weight="bold" fill="#234b60">C</text><path d="M9.5 0L16 3.8L9.5 7.6z" fill="#3c3f41"/><path d="M10.5 0.8L15.2 3.8L10.5 6.8z" fill="#59a869"/></svg>
<span id="t62" style="position:absolute;left:474px;top:54.5px;height:18px;line-height:18px;font-size:13px;color:#bbbbbb;white-space:pre;letter-spacing:0.062px;">HelloWorld.java</span>
<svg style="position:absolute;left:573.5px;top:59px;" width="9" height="9" viewBox="0 0 9 9"><path d="M0.500 0.500L8 8M8 0.500L0.500 8" stroke="#6e7376" stroke-width="1" fill="none"/></svg>
<svg style="position:absolute;left:596px;top:55px;" width="16" height="16" viewBox="0 0 16 16"><circle cx="8" cy="8" r="7" fill="#3b90b5"/><text x="8" y="11.3" text-anchor="middle" font-family="Liberation Sans,sans-serif" font-size="9.5" font-weight="bold" fill="#234b60">C</text></svg>
<span id="t63" style="position:absolute;left:616px;top:54.5px;height:18px;line-height:18px;font-size:13px;color:#bbbbbb;white-space:pre;letter-spacing:0.141px;">HelloWorldController.java</span>
<svg style="position:absolute;left:774px;top:59px;" width="9" height="9" viewBox="0 0 9 9"><path d="M0.500 0.500L8 8M8 0.500L0.500 8" stroke="#6e7376" stroke-width="1" fill="none"/></svg>
<svg style="position:absolute;left:796px;top:55px;" width="16" height="16" viewBox="0 0 16 16"><circle cx="8" cy="8" r="7" fill="#3b90b5"/><text x="8" y="11.3" text-anchor="middle" font-family="Liberation Sans,sans-serif" font-size="9.5" font-weight="bold" fill="#234b60">C</text></svg>
<span id="t64" style="position:absolute;left:816px;top:54.5px;height:18px;line-height:18px;font-size:13px;color:#bbbbbb;white-space:pre;letter-spacing:-0.032px;">ThreadHelper.java</span>
<svg style="position:absolute;left:929.5px;top:59px;" width="9" height="9" viewBox="0 0 9 9"><path d="M0.500 0.500L8 8M8 0.500L0.500 8" stroke="#6e7376" stroke-width="1" fill="none"/></svg>
<svg style="position:absolute;left:952px;top:55px;" width="16" height="16" viewBox="0 0 16 16"><circle cx="8" cy="8" r="7" fill="#3b90b5"/><text x="8" y="11.3" text-anchor="middle" font-family="Liberation Sans,sans-serif" font-size="9.5" font-weight="bold" fill="#234b60">C</text></svg>
<span id="t65" style="position:absolute;left:972px;top:54.5px;height:18px;line-height:18px;font-size:13px;color:#bbbbbb;white-space:pre;letter-spacing:-0.139px;">ZipUtil.java</span>
<svg style="position:absolute;left:1042.5px;top:59px;" width="9" height="9" viewBox="0 0 9 9"><path d="M0.500 0.500L8 8M8 0.500L0.500 8" stroke="#6e7376" stroke-width="1" fill="none"/></svg>
<svg style="position:absolute;left:1065px;top:55px;" width="16" height="16" viewBox="0 0 16 16"><circle cx="8" cy="8" r="7" fill="#3b90b5"/><text x="8" y="11.3" text-anchor="middle" font-family="Liberation Sans,sans-serif" font-size="9.5" font-weight="bold" fill="#234b60">C</text></svg>
<span id="t66" style="position:absolute;left:1085px;top:54.5px;height:18px;line-height:18px;font-size:13px;color:#bbbbbb;white-space:pre;letter-spacing:-0.248px;">ParamsEntity.java</span>
<svg style="position:absolute;left:1192.5px;top:59px;" width="9" height="9" viewBox="0 0 9 9"><path d="M0.500 0.500L8 8M8 0.500L0.500 8" stroke="#6e7376" stroke-width="1" fill="none"/></svg>
<svg style="position:absolute;left:1215px;top:55px;" width="16" height="16" viewBox="0 0 16 16"><circle cx="8" cy="8" r="7" fill="#3b90b5"/><text x="8" y="11.3" text-anchor="middle" font-family="Liberation Sans,sans-serif" font-size="9.5" font-weight="bold" fill="#234b60">C</text></svg>
<span id="t67" style="position:absolute;left:1235px;top:54.5px;height:18px;line-height:18px;font-size:13px;color:#bbbbbb;white-space:pre;letter-spacing:-0.294px;">TypeCast.java</span>
<svg style="position:absolute;left:1321.5px;top:59px;" width="9" height="9" viewBox="0 0 9 9"><path d="M0.500 0.500L8 8M8 0.500L0.500 8" stroke="#6e7376" stroke-width="1" fill="none"/></svg>
<div style="position:absolute;left:270px;top:77px;width:1086px;height:497px;background:#2b2b2b;overflow:hidden">
<div style="position:absolute;left:0px;top:0px;width:58px;height:497px;background:#313335;"></div>
<div style="position:absolute;left:0px;top:306px;width:1086px;height:22px;background:#323232;"></div>
<div style="position:absolute;left:0px;top:306px;width:58px;height:22px;background:#323335;"></div>
<div style="position:absolute;left:58px;top:0px;width:1px;height:497px;background:#555555;"></div>
<div style="position:absolute;left:1024px;top:23px;width:1px;height:480px;background:#4b4b4b;"></div>
<div style="position:absolute;left:96px;top:0px;width:824px;height:20px;background:#52503a;"></div>
<div style="position:absolute;left:127px;top:218px;width:26px;height:22px;background:#52503a;"></div>
<div style="position:absolute;left:94px;top:64px;width:1px;height:66px;background:#3b3b3b;"></div>
<div style="position:absolute;left:94px;top:196px;width:1px;height:198px;background:#3b3b3b;"></div>
<div style="position:absolute;left:126px;top:240px;width:1px;height:110px;background:#3b3b3b;"></div>
<div style="position:absolute;left:158px;top:262px;width:1px;height:22px;background:#3b3b3b;"></div>
<div style="position:absolute;left:158px;top:306px;width:1px;height:22px;background:#3b3b3b;"></div>
<div style="position:absolute;left:94px;top:460px;width:1px;height:44px;background:#3b3b3b;"></div>
<span id="t68" style="position:absolute;left:5.199999999999989px;top:1.5px;height:18px;line-height:18px;font-size:13.3px;color:#606366;white-space:pre;font-family:'Liberation Mono','DejaVu Sans Mono',monospace;transform:scaleX(0.870);transform-origin:0 50%;">14</span>
<span id="t69" style="position:absolute;left:5.199999999999989px;top:23.5px;height:18px;line-height:18px;font-size:13.3px;color:#606366;white-space:pre;font-family:'Liberation Mono','DejaVu Sans Mono',monospace;transform:scaleX(0.870);transform-origin:0 50%;">15</span>
<span id="t70" style="position:absolute;left:5.199999999999989px;top:45.5px;height:18px;line-height:18px;font-size:13.3px;color:#606366;white-space:pre;font-family:'Liberation Mono','DejaVu Sans Mono',monospace;transform:scaleX(0.870);transform-origin:0 50%;">16</span>
<span id="t71" style="position:absolute;left:5.199999999999989px;top:67.5px;height:18px;line-height:18px;font-size:13.3px;color:#606366;white-space:pre;font-family:'Liberation Mono','DejaVu Sans Mono',monospace;transform:scaleX(0.870);transform-origin:0 50%;">17</span>
<span id="t72" style="position:absolute;left:5.199999999999989px;top:89.5px;height:18px;line-height:18px;font-size:13.3px;color:#606366;white-space:pre;font-family:'Liberation Mono','DejaVu Sans Mono',monospace;transform:scaleX(0.870);transform-origin:0 50%;">18</span>
<span id="t73" style="position:absolute;left:5.199999999999989px;top:111.5px;height:18px;line-height:18px;font-size:13.3px;color:#606366;white-space:pre;font-family:'Liberation Mono','DejaVu Sans Mono',monospace;transform:scaleX(0.870);transform-origin:0 50%;">19</span>
<span id="t74" style="position:absolute;left:5.199999999999989px;top:133.5px;height:18px;line-height:18px;font-size:13.3px;color:#606366;white-space:pre;font-family:'Liberation Mono','DejaVu Sans Mono',monospace;transform:scaleX(0.870);transform-origin:0 50%;">20</span>
<span id="t75" style="position:absolute;left:5.199999999999989px;top:155.5px;height:18px;line-height:18px;font-size:13.3px;color:#606366;white-space:pre;font-family:'Liberation Mono','DejaVu Sans Mono',monospace;transform:scaleX(0.870);transform-origin:0 50%;">21</span>
<span id="t76" style="position:absolute;left:5.199999999999989px;top:177.5px;height:18px;line-height:18px;font-size:13.3px;color:#606366;white-space:pre;font-family:'Liberation Mono','DejaVu Sans Mono',monospace;transform:scaleX(0.870);transform-origin:0 50%;">22</span>
<span id="t77" style="position:absolute;left:5.199999999999989px;top:199.5px;height:18px;line-height:18px;font-size:13.3px;color:#606366;white-space:pre;font-family:'Liberation Mono','DejaVu Sans Mono',monospace;transform:scaleX(0.870);transform-origin:0 50%;">23</span>
<span id="t78" style="position:absolute;left:5.199999999999989px;top:221.5px;height:18px;line-height:18px;font-size:13.3px;color:#606366;white-space:pre;font-family:'Liberation Mono','DejaVu Sans Mono',monospace;transform:scaleX(0.870);transform-origin:0 50%;">24</span>
<span id="t79" style="position:absolute;left:5.199999999999989px;top:243.5px;height:18px;line-height:18px;font-size:13.3px;color:#606366;white-space:pre;font-family:'Liberation Mono','DejaVu Sans Mono',monospace;transform:scaleX(0.870);transform-origin:0 50%;">25</span>
<span id="t80" style="position:absolute;left:5.199999999999989px;top:265.5px;height:18px;line-height:18px;font-size:13.3px;color:#606366;white-space:pre;font-family:'Liberation Mono','DejaVu Sans Mono',monospace;transform:scaleX(0.870);transform-origin:0 50%;">26</span>
<span id="t81" style="position:absolute;left:5.199999999999989px;top:287.5px;height:18px;line-height:18px;font-size:13.3px;color:#606366;white-space:pre;font-family:'Liberation Mono','DejaVu Sans Mono',monospace;transform:scaleX(0.870);transform-origin:0 50%;">27</span>
<span id="t82" style="position:absolute;left:5.199999999999989px;top:309.5px;height:18px;line-height:18px;font-size:13.3px;color:#a4a3a3;white-space:pre;font-family:'Liberation Mono','DejaVu Sans Mono',monospace;transform:scaleX(0.870);transform-origin:0 50%;">28</span>
<span id="t83" style="position:absolute;left:5.199999999999989px;top:331.5px;height:18px;line-height:18px;font-size:13.3px;color:#606366;white-space:pre;font-family:'Liberation Mono','DejaVu Sans Mono',monospace;transform:scaleX(0.870);transform-origin:0 50%;">29</span>
<span id="t84" style="position:absolute;left:5.199999999999989px;top:353.5px;height:18px;line-height:18px;font-size:13.3px;color:#606366;white-space:pre;font-family:'Liberation Mono','DejaVu Sans Mono',monospace;transform:scaleX(0.870);transform-origin:0 50%;">30</span>
<span id="t85" style="position:absolute;left:5.199999999999989px;top:375.5px;height:18px;line-height:18px;font-size:13.3px;color:#606366;white-space:pre;font-family:'Liberation Mono','DejaVu Sans Mono',monospace;transform:scaleX(0.870);transform-origin:0 50%;">31</span>
<span id="t86" style="position:absolute;left:5.199999999999989px;top:397.5px;height:18px;line-height:18px;font-size:13.3px;color:#606366;white-space:pre;font-family:'Liberation Mono','DejaVu Sans Mono',monospace;transform:scaleX(0.870);transform-origin:0 50%;">32</span>
<span id="t87" style="position:absolute;left:5.199999999999989px;top:419.5px;height:18px;line-height:18px;font-size:13.3px;color:#606366;white-space:pre;font-family:'Liberation Mono','DejaVu Sans Mono',monospace;transform:scaleX(0.870);transform-origin:0 50%;">33</span>
<span id="t88" style="position:absolute;left:5.199999999999989px;top:441.5px;height:18px;line-height:18px;font-size:13.3px;color:#606366;white-space:pre;font-family:'Liberation Mono','DejaVu Sans Mono',monospace;transform:scaleX(0.870);transform-origin:0 50%;">34</span>
<span id="t89" style="position:absolute;left:5.199999999999989px;top:463.5px;height:18px;line-height:18px;font-size:13.3px;color:#606366;white-space:pre;font-family:'Liberation Mono','DejaVu Sans Mono',monospace;transform:scaleX(0.870);transform-origin:0 50%;">35</span>
<span id="t90" style="position:absolute;left:5.199999999999989px;top:485.5px;height:18px;line-height:18px;font-size:13.3px;color:#606366;white-space:pre;font-family:'Liberation Mono','DejaVu Sans Mono',monospace;transform:scaleX(0.870);transform-origin:0 50%;">36</span>
<svg style="position:absolute;left:54px;top:49px;" width="9" height="12" viewBox="0 0 9 12"><path d="M0.500 0.500h8v6l-4 4.500l-4-4.500z" fill="#2f3133" stroke="#6a6d70" stroke-width="1"/><path d="M2.500 4.500h4" stroke="#6a6d70" stroke-width="1"/></svg>
<svg style="position:absolute;left:54px;top:181px;" width="9" height="12" viewBox="0 0 9 12"><path d="M0.500 0.500h8v6l-4 4.500l-4-4.500z" fill="#2f3133" stroke="#6a6d70" stroke-width="1"/><path d="M2.500 4.500h4" stroke="#6a6d70" stroke-width="1"/></svg>
<svg style="position:absolute;left:54px;top:225px;" width="9" height="12" viewBox="0 0 9 12"><path d="M0.500 0.500h8v6l-4 4.500l-4-4.500z" fill="#2f3133" stroke="#6a6d70" stroke-width="1"/><path d="M2.500 4.500h4" stroke="#6a6d70" stroke-width="1"/></svg>
<svg style="position:absolute;left:54px;top:247px;" width="9" height="12" viewBox="0 0 9 12"><path d="M0.500 0.500h8v6l-4 4.500l-4-4.500z" fill="#2f3133" stroke="#6a6d70" stroke-width="1"/><path d="M2.500 4.500h4" stroke="#6a6d70" stroke-width="1"/></svg>
<svg style="position:absolute;left:54px;top:445px;" width="9" height="12" viewBox="0 0 9 12"><path d="M0.500 0.500h8v6l-4 4.500l-4-4.500z" fill="#2f3133" stroke="#6a6d70" stroke-width="1"/><path d="M2.500 4.500h4" stroke="#6a6d70" stroke-width="1"/></svg>
<svg style="position:absolute;left:54px;top:134px;" width="9" height="12" viewBox="0 0 9 12"><path d="M0.500 11.500h8V5L4.500 0.500L0.500 5z" fill="#2f3133" stroke="#6a6d70" stroke-width="1"/><path d="M2.500 7.500h4" stroke="#6a6d70" stroke-width="1"/></svg>
<svg style="position:absolute;left:54px;top:288px;" width="9" height="12" viewBox="0 0 9 12"><path d="M0.500 11.500h8V5L4.500 0.500L0.500 5z" fill="#2f3133" stroke="#6a6d70" stroke-width="1"/><path d="M2.500 7.500h4" stroke="#6a6d70" stroke-width="1"/></svg>
<svg style="position:absolute;left:54px;top:332px;" width="9" height="12" viewBox="0 0 9 12"><path d="M0.500 11.500h8V5L4.500 0.500L0.500 5z" fill="#2f3133" stroke="#6a6d70" stroke-width="1"/><path d="M2.500 7.500h4" stroke="#6a6d70" stroke-width="1"/></svg>
<svg style="position:absolute;left:54px;top:354px;" width="9" height="12" viewBox="0 0 9 12"><path d="M0.500 11.500h8V5L4.500 0.500L0.500 5z" fill="#2f3133" stroke="#6a6d70" stroke-width="1"/><path d="M2.500 7.500h4" stroke="#6a6d70" stroke-width="1"/></svg>
<svg style="position:absolute;left:54px;top:398px;" width="9" height="12" viewBox="0 0 9 12"><path d="M0.500 11.500h8V5L4.500 0.500L0.500 5z" fill="#2f3133" stroke="#6a6d70" stroke-width="1"/><path d="M2.500 7.500h4" stroke="#6a6d70" stroke-width="1"/></svg>
<svg style="position:absolute;left:30px;top:47.5px;" width="10" height="12" viewBox="0 0 10 12"><path d="M0.500 0.500L9 5.800L0.500 11z" fill="#59a869"/></svg>
<span id="t91" style="position:absolute;left:29.5px;top:175.0px;height:18px;line-height:18px;font-size:13.5px;color:#c3c5c7;white-space:pre;">@</span>
<svg style="position:absolute;left:72px;top:307px;" width="12" height="15" viewBox="0 0 12 15"><circle cx="6" cy="5.500" r="5" fill="#f0a732"/><rect x="3.500" y="9" width="5" height="2" fill="#f0a732"/><rect x="3.500" y="11.800" width="5" height="1.100" fill="#c8cacc"/><rect x="4" y="13.500" width="4" height="1.100" fill="#c8cacc"/></svg>
<span style="position:absolute;left:96px;top:-0.30000000000000004px;height:22px;line-height:22px;font-family:'Liberation Mono','DejaVu Sans Mono',monospace;font-size:13.333px;white-space:pre;color:#a9b7c6;transform:scaleY(1.1);transform-origin:0 14.55px"><span style="color:#cc7832;">private static final </span><span style="color:#a9b7c6;">Logger </span><span style="color:#8c8a80;font-style:italic;">LOG</span><span style="color:#a9b7c6;"> = LoggerFactory.</span><span style="color:#a9b7c6;font-style:italic;">getLogger</span><span style="color:#a9b7c6;">(com.huawei.demoapplication.HelloWorld.</span><span style="color:#cc7832;">class</span><span style="color:#a9b7c6;">)</span><span style="color:#cc7832;">;</span></span>
<span style="position:absolute;left:96px;top:43.7px;height:22px;line-height:22px;font-family:'Liberation Mono','DejaVu Sans Mono',monospace;font-size:13.333px;white-space:pre;color:#a9b7c6;transform:scaleY(1.1);transform-origin:0 14.55px"><span style="color:#cc7832;">public static void </span><span style="color:#ffc66d;">main</span><span style="color:#a9b7c6;">(String[] args) </span><span style="color:#cc7832;">throws </span><span style="color:#808080;">IOException</span><span style="color:#a9b7c6;"> {</span></span>
<span style="position:absolute;left:96px;top:65.7px;height:22px;line-height:22px;font-family:'Liberation Mono','DejaVu Sans Mono',monospace;font-size:13.333px;white-space:pre;color:#a9b7c6;transform:scaleY(1.1);transform-origin:0 14.55px"><span style="color:#a9b7c6;">    </span><span style="color:#cc7832;">int</span><span style="color:#a9b7c6;">[] nums = {</span><span style="color:#6897bb;">2</span><span style="color:#cc7832;">, </span><span style="color:#6897bb;">2</span><span style="color:#cc7832;">, </span><span style="color:#6897bb;">1</span><span style="color:#a9b7c6;">}</span><span style="color:#cc7832;">;</span></span>
<span style="position:absolute;left:96px;top:87.7px;height:22px;line-height:22px;font-family:'Liberation Mono','DejaVu Sans Mono',monospace;font-size:13.333px;white-space:pre;color:#a9b7c6;transform:scaleY(1.1);transform-origin:0 14.55px"><span style="color:#a9b7c6;">    </span><span style="color:#cc7832;">int </span><span style="color:#a9b7c6;">k = </span><span style="color:#a9b7c6;font-style:italic;">singleNumber</span><span style="color:#a9b7c6;">(nums)</span><span style="color:#cc7832;">;</span></span>
<span style="position:absolute;left:96px;top:109.7px;height:22px;line-height:22px;font-family:'Liberation Mono','DejaVu Sans Mono',monospace;font-size:13.333px;white-space:pre;color:#a9b7c6;transform:scaleY(1.1);transform-origin:0 14.55px"><span style="color:#a9b7c6;">    System.</span><span style="color:#9876aa;font-style:italic;">out</span><span style="color:#a9b7c6;">.println(k)</span><span style="color:#cc7832;">;</span></span>
<span style="position:absolute;left:96px;top:131.7px;height:22px;line-height:22px;font-family:'Liberation Mono','DejaVu Sans Mono',monospace;font-size:13.333px;white-space:pre;color:#a9b7c6;transform:scaleY(1.1);transform-origin:0 14.55px"><span style="color:#a9b7c6;">}</span></span>
<span style="position:absolute;left:96px;top:175.7px;height:22px;line-height:22px;font-family:'Liberation Mono','DejaVu Sans Mono',monospace;font-size:13.333px;white-space:pre;color:#a9b7c6;transform:scaleY(1.1);transform-origin:0 14.55px"><span style="color:#cc7832;">public static int </span><span style="color:#ffc66d;">singleNumber</span><span style="color:#a9b7c6;">(</span><span style="color:#cc7832;">int</span><span style="color:#a9b7c6;">[] nums){</span></span>
<span style="position:absolute;left:96px;top:197.7px;height:22px;line-height:22px;font-family:'Liberation Mono','DejaVu Sans Mono',monospace;font-size:13.333px;white-space:pre;color:#a9b7c6;transform:scaleY(1.1);transform-origin:0 14.55px"><span style="color:#a9b7c6;">    List&lt;Integer&gt; list = </span><span style="color:#cc7832;">new </span><span style="color:#a9b7c6;">ArrayList&lt;&gt;()</span><span style="color:#cc7832;">;</span></span>
<span style="position:absolute;left:96px;top:219.7px;height:22px;line-height:22px;font-family:'Liberation Mono','DejaVu Sans Mono',monospace;font-size:13.333px;white-space:pre;color:#a9b7c6;transform:scaleY(1.1);transform-origin:0 14.55px"><span style="color:#a9b7c6;">    </span><span style="color:#cc7832;">for </span><span style="color:#a9b7c6;">(</span><span style="color:#cc7832;">int </span><span style="color:#a9b7c6;text-decoration:underline;text-underline-offset:2px;">i</span><span style="color:#a9b7c6;"> = </span><span style="color:#6897bb;">0</span><span style="color:#cc7832;">; </span><span style="color:#a9b7c6;text-decoration:underline;text-underline-offset:2px;">i</span><span style="color:#a9b7c6;"> &lt; nums.</span><span style="color:#9876aa;">length</span><span style="color:#cc7832;">; </span><span style="color:#a9b7c6;text-decoration:underline;text-underline-offset:2px;">i</span><span style="color:#a9b7c6;">++) {</span></span>
<span style="position:absolute;left:96px;top:241.7px;height:22px;line-height:22px;font-family:'Liberation Mono','DejaVu Sans Mono',monospace;font-size:13.333px;white-space:pre;color:#a9b7c6;transform:scaleY(1.1);transform-origin:0 14.55px"><span style="color:#a9b7c6;">        </span><span style="color:#cc7832;">if </span><span style="color:#a9b7c6;">(list.contains(nums[</span><span style="color:#a9b7c6;text-decoration:underline;text-underline-offset:2px;">i</span><span style="color:#a9b7c6;">])) {</span></span>
<span style="position:absolute;left:96px;top:263.7px;height:22px;line-height:22px;font-family:'Liberation Mono','DejaVu Sans Mono',monospace;font-size:13.333px;white-space:pre;color:#a9b7c6;transform:scaleY(1.1);transform-origin:0 14.55px"><span style="color:#a9b7c6;">            list.remove(nums[</span><span style="color:#a9b7c6;text-decoration:underline;text-underline-offset:2px;">i</span><span style="color:#a9b7c6;">])</span><span style="color:#cc7832;">;</span></span>
<span style="position:absolute;left:96px;top:285.7px;height:22px;line-height:22px;font-family:'Liberation Mono','DejaVu Sans Mono',monospace;font-size:13.333px;white-space:pre;color:#a9b7c6;transform:scaleY(1.1);transform-origin:0 14.55px"><span style="color:#a9b7c6;">        } </span><span style="color:#cc7832;">else </span><span style="color:#a9b7c6;">{</span></span>
<span style="position:absolute;left:96px;top:307.7px;height:22px;line-height:22px;font-family:'Liberation Mono','DejaVu Sans Mono',monospace;font-size:13.333px;white-space:pre;color:#a9b7c6;transform:scaleY(1.1);transform-origin:0 14.55px"><span style="color:#a9b7c6;">            list.add(nums[</span><span style="color:#a9b7c6;text-decoration:underline;text-underline-offset:2px;">i</span><span style="color:#a9b7c6;">])</span><span style="color:#cc7832;">;</span></span>
<span style="position:absolute;left:96px;top:329.7px;height:22px;line-height:22px;font-family:'Liberation Mono','DejaVu Sans Mono',monospace;font-size:13.333px;white-space:pre;color:#a9b7c6;transform:scaleY(1.1);transform-origin:0 14.55px"><span style="color:#a9b7c6;">        }</span></span>
<span style="position:absolute;left:96px;top:351.7px;height:22px;line-height:22px;font-family:'Liberation Mono','DejaVu Sans Mono',monospace;font-size:13.333px;white-space:pre;color:#a9b7c6;transform:scaleY(1.1);transform-origin:0 14.55px"><span style="color:#a9b7c6;">    }</span></span>
<span style="position:absolute;left:96px;top:373.7px;height:22px;line-height:22px;font-family:'Liberation Mono','DejaVu Sans Mono',monospace;font-size:13.333px;white-space:pre;color:#a9b7c6;transform:scaleY(1.1);transform-origin:0 14.55px"><span style="color:#a9b7c6;">    </span><span style="color:#cc7832;">return </span><span style="color:#a9b7c6;">list.get(</span><span style="color:#6897bb;">0</span><span style="color:#a9b7c6;">)</span><span style="color:#cc7832;">;</span></span>
<span style="position:absolute;left:96px;top:395.7px;height:22px;line-height:22px;font-family:'Liberation Mono','DejaVu Sans Mono',monospace;font-size:13.333px;white-space:pre;color:#a9b7c6;transform:scaleY(1.1);transform-origin:0 14.55px"><span style="color:#a9b7c6;">}</span></span>
<span style="position:absolute;left:96px;top:439.7px;height:22px;line-height:22px;font-family:'Liberation Mono','DejaVu Sans Mono',monospace;font-size:13.333px;white-space:pre;color:#a9b7c6;transform:scaleY(1.1);transform-origin:0 14.55px"><span style="color:#cc7832;">public static boolean </span><span style="color:#808080;">ping</span><span style="color:#a9b7c6;">(String target_name</span><span style="color:#cc7832;">, </span><span style="color:#cc7832;">int </span><span style="color:#a9b7c6;">out_time) </span><span style="color:#cc7832;">throws </span><span style="color:#a9b7c6;">IOException{</span></span>
<span style="position:absolute;left:96px;top:461.7px;height:22px;line-height:22px;font-family:'Liberation Mono','DejaVu Sans Mono',monospace;font-size:13.333px;white-space:pre;color:#a9b7c6;transform:scaleY(1.1);transform-origin:0 14.55px"><span style="color:#a9b7c6;">    Runtime runtime = Runtime.</span><span style="color:#a9b7c6;font-style:italic;">getRuntime</span><span style="color:#a9b7c6;">()</span><span style="color:#cc7832;">;</span></span>
<div style="position:absolute;left:65px;top:487px;width:752px;height:9px;background:rgba(128,130,132,0.42);"></div>
<div style="position:absolute;left:1072px;top:89px;width:14px;height:2px;background:#d28a28;"></div>
<div style="position:absolute;left:1072px;top:99px;width:14px;height:2px;background:#d28a28;"></div>
<div style="position:absolute;left:1072px;top:139px;width:14px;height:2px;background:#d28a28;"></div>
<div style="position:absolute;left:1072px;top:187.5px;width:14px;height:2px;background:#d28a28;"></div>
<div style="position:absolute;left:1072px;top:247px;width:14px;height:2px;background:#d28a28;"></div>
<div style="position:absolute;left:1072px;top:256px;width:14px;height:2px;background:#d28a28;"></div>
<div style="position:absolute;left:1072px;top:330px;width:14px;height:2px;background:#d28a28;"></div>
<div style="position:absolute;left:1072px;top:335px;width:14px;height:2px;background:#d28a28;"></div>
<div style="position:absolute;left:1077px;top:99px;width:8px;height:100px;background:rgba(128,130,132,0.42);"></div>
<svg style="position:absolute;left:986px;top:7px;" width="12" height="12" viewBox="0 0 12 12"><path d="M6 0.500L11.800 11H0.200z" fill="#e69a3a"/><rect x="5.300" y="4" width="1.400" height="4" fill="#3a2a10"/><rect x="5.300" y="8.800" width="1.400" height="1.300" fill="#3a2a10"/></svg>
<span id="t92" style="position:absolute;left:1001px;top:4.5px;height:18px;line-height:18px;font-size:13px;color:#bbbbbb;white-space:pre;">8</span>
<svg style="position:absolute;left:1016px;top:6px;" width="12" height="14" viewBox="0 0 12 14"><path d="M1.500 6.500L4.500 9.500L10.500 2" fill="none" stroke="#59a869" stroke-width="1.800"/><path d="M1 12l2-1.500l2 1.500l2-1.500l2 1.500l2-1.500" fill="none" stroke="#59a869" stroke-width="0.900"/></svg>
<span id="t93" style="position:absolute;left:1031px;top:4.5px;height:18px;line-height:18px;font-size:13px;color:#bbbbbb;white-space:pre;">1</span>
<svg style="position:absolute;left:1048px;top:9px;" width="10" height="7" viewBox="0 0 10 7"><path d="M1 6L5 1.500L9 6" fill="none" stroke="#7d7f82" stroke-width="1.200"/></svg>
<svg style="position:absolute;left:1069px;top:10px;" width="10" height="7" viewBox="0 0 10 7"><path d="M1 1L5 5.500L9 1" fill="none" stroke="#7d7f82" stroke-width="1.200"/></svg>
</div>
<div style="position:absolute;left:1356px;top:50px;width:1px;height:524px;background:#323232;"></div>
<span id="t94" style="position:absolute;left:1363.4px;top:54.5px;height:18px;line-height:18px;font-size:13px;color:#bbbbbb;white-space:pre;letter-spacing:-0.096px;">Maven</span>
<svg style="position:absolute;left:1663px;top:55px;" width="16" height="16" viewBox="0 0 16 16"><g transform="translate(8 8) scale(0.930) translate(-8 -8)"><g fill="#afb1b3"><circle cx="8" cy="8" r="5"/><rect x="6.200" y="1" width="3.600" height="3.600" rx="0.600" transform="rotate(0 8 8)"/><rect x="6.200" y="1" width="3.600" height="3.600" rx="0.600" transform="rotate(60 8 8)"/><rect x="6.200" y="1" width="3.600" height="3.600" rx="0.600" transform="rotate(120 8 8)"/><rect x="6.200" y="1" width="3.600" height="3.600" rx="0.600" transform="rotate(180 8 8)"/><rect x="6.200" y="1" width="3.600" height="3.600" rx="0.600" transform="rotate(240 8 8)"/><rect x="6.200" y="1" width="3.600" height="3.600" rx="0.600" transform="rotate(300 8 8)"/></g><circle cx="8" cy="8" r="2.100" fill="#3c3f41"/></g></svg>
<svg style="position:absolute;left:1689px;top:55px;" width="16" height="16" viewBox="0 0 16 16"><rect x="2" y="7.200" width="12" height="1.800" fill="#afb1b3"/></svg>
<div style="position:absolute;left:1357px;top:76px;width:353px;height:1px;background:#323232;"></div>
<svg style="position:absolute;left:1364px;top:83px;" width="16" height="16" viewBox="0 0 16 16"><path d="M13.500 8a5.500 5.500 0 0 1-10 3.200M2.500 8a5.500 5.500 0 0 1 10-3.200" fill="none" stroke="#afb1b3" stroke-width="1.700"/><path d="M13.800 1.500v4.300h-4.300zM2.200 14.500v-4.300h4.300z" fill="#afb1b3"/></svg>
<svg style="position:absolute;left:1390px;top:83px;" width="17" height="16" viewBox="0 0 17 16"><path d="M0.500 2h5l1.500 2H13v4.500H8.500V12H0.500z" fill="#afb1b3"/><path d="M15.800 11.800a3.300 3.300 0 0 1-6 1.800M9.200 11.800a3.300 3.300 0 0 1 6-1.800" fill="none" stroke="#afb1b3" stroke-width="1.200"/><path d="M16 7.800v2.800h-2.800zM9 15.800V13h2.800z" fill="#afb1b3"/></svg>
<svg style="position:absolute;left:1417px;top:83px;" width="17" height="16" viewBox="0 0 17 16"><g fill="#afb1b3"><rect x="6.300" y="1" width="1.800" height="7"/><path d="M3 6.500h8.400L7.200 11z"/><rect x="1" y="12" width="12.500" height="1.800"/><path d="M11.500 14.500h5L14 17z"/></g></svg>
<div style="position:absolute;left:1440px;top:82px;width:1px;height:18px;background:#555759;"></div>
<svg style="position:absolute;left:1450px;top:84px;" width="14" height="14" viewBox="0 0 14 14"><path d="M7 1v12M1 7h12" stroke="#afb1b3" stroke-width="1.800"/></svg>
<div style="position:absolute;left:1473px;top:82px;width:1px;height:18px;background:#555759;"></div>
<svg style="position:absolute;left:1485px;top:85px;" width="11" height="13" viewBox="0 0 11 13"><path d="M0.500 0.500L10.500 6.500L0.500 12.500z" fill="#5e6163"/></svg>
<span style="position:absolute;left:1507px;top:79px;font-size:19px;line-height:22px;font-weight:bold;font-style:italic;color:#afb1b3;-webkit-text-stroke:0.500px #afb1b3">m</span>
<svg style="position:absolute;left:1535px;top:84px;" width="15" height="14" viewBox="0 0 15 14"><g stroke="#afb1b3" stroke-width="1.700" fill="none"><path d="M5.500 0.500L4 13.500M10.500 0.500L9 13.500"/></g><g fill="#afb1b3"><rect x="0" y="6" width="5" height="2"/><rect x="9.500" y="6" width="5" height="2"/></g></svg>
<svg style="position:absolute;left:1560px;top:84px;" width="15" height="15" viewBox="0 0 15 15"><circle cx="7.500" cy="7.500" r="7.200" fill="#3a8db5"/><path d="M8.800 2L4 8.300h3L6 13l5-6.800H8z" fill="#1f3c50"/></svg>
<svg style="position:absolute;left:1586px;top:83px;" width="16" height="16" viewBox="0 0 16 16"><g fill="#afb1b3"><rect x="2" y="7" width="12" height="2"/><path d="M8 5.300l3.300-3.300H4.700z"/><path d="M8 10.700l3.300 3.300H4.700z"/></g></svg>
<div style="position:absolute;left:1610px;top:82px;width:1px;height:18px;background:#555759;"></div>
<svg style="position:absolute;left:1620px;top:83px;" width="16" height="16" viewBox="0 0 16 16"><g transform="rotate(45 8 8)"><rect x="6.500" y="6" width="3" height="10" rx="1.300" fill="#afb1b3"/><circle cx="8" cy="4.300" r="4.200" fill="#afb1b3"/><rect x="6.400" y="-1" width="3.200" height="5.200" fill="#3c3f41"/></g><path d="M11 13h5l-2.500 2.800z" fill="#afb1b3"/></svg>
<div style="position:absolute;left:1357px;top:106px;width:353px;height:20px;background:#0d293e;"></div>
<svg style="position:absolute;left:1360px;top:108px;" width="16" height="16" viewBox="0 0 16 16"><path d="M5 3.300L10 8L5 12.700" fill="none" stroke="#a4a6a8" stroke-width="1.250"/></svg>
<svg style="position:absolute;left:1381px;top:108px;" width="16" height="16" viewBox="0 0 16 16"><path d="M1 2h5l1.500 2H15v5.500H9L8 13H1z" fill="#9aa7b0"/><path d="M7.500 10.500L10.500 13.500L15.500 7" fill="none" stroke="#3a9ee0" stroke-width="2"/></svg>
<span id="t95" style="position:absolute;left:1400px;top:106.5px;height:18px;line-height:18px;font-size:13px;color:#d0d2d4;white-space:pre;letter-spacing:-0.088px;">Profiles</span>
<svg style="position:absolute;left:1360px;top:128px;" width="16" height="16" viewBox="0 0 16 16"><path d="M5 3.300L10 8L5 12.700" fill="none" stroke="#a4a6a8" stroke-width="1.250"/></svg>
<svg style="position:absolute;left:1382px;top:128px;" width="16" height="16" viewBox="0 0 16 16"><path d="M6 1h6v10H2V5h4z" fill="#8f9ba3"/><path d="M5 1v3H2z" fill="#8f9ba3"/><rect x="4.500" y="9" width="12" height="7" fill="#3c3f41"/><rect x="2" y="9" width="2.500" height="5.500" fill="#8f9ba3"/><text x="5" y="15.800" font-family="Liberation Sans,sans-serif" font-size="11.500" font-weight="bold" font-style="italic" fill="#3a9ee0">m</text></svg>
<span id="t96" style="position:absolute;left:1400px;top:126.5px;height:18px;line-height:18px;font-size:13px;color:#bbbbbb;white-space:pre;letter-spacing:0.178px;">demoApplication</span>
<div style="position:absolute;left:16px;top:573px;width:1694px;height:1px;background:#323232;"></div>
<span id="t97" style="position:absolute;left:22px;top:578.5px;height:18px;line-height:18px;font-size:13px;color:#bbbbbb;white-space:pre;letter-spacing:-0.115px;">CodeArts Check:</span>
<span id="t98" style="position:absolute;left:137.5px;top:578.5px;height:18px;line-height:18px;font-size:13px;color:#bbbbbb;white-space:pre;letter-spacing:-0.320px;">Defects</span>
<span id="t99" style="position:absolute;left:204.4px;top:578.5px;height:18px;line-height:18px;font-size:13px;color:#bbbbbb;white-space:pre;letter-spacing:-0.185px;">Console</span>
<svg style="position:absolute;left:1663px;top:579px;" width="16" height="16" viewBox="0 0 16 16"><g transform="translate(8 8) scale(0.930) translate(-8 -8)"><g fill="#afb1b3"><circle cx="8" cy="8" r="5"/><rect x="6.200" y="1" width="3.600" height="3.600" rx="0.600" transform="rotate(0 8 8)"/><rect x="6.200" y="1" width="3.600" height="3.600" rx="0.600" transform="rotate(60 8 8)"/><rect x="6.200" y="1" width="3.600" height="3.600" rx="0.600" transform="rotate(120 8 8)"/><rect x="6.200" y="1" width="3.600" height="3.600" rx="0.600" transform="rotate(180 8 8)"/><rect x="6.200" y="1" width="3.600" height="3.600" rx="0.600" transform="rotate(240 8 8)"/><rect x="6.200" y="1" width="3.600" height="3.600" rx="0.600" transform="rotate(300 8 8)"/></g><circle cx="8" cy="8" r="2.100" fill="#3c3f41"/></g></svg>
<svg style="position:absolute;left:1689px;top:579px;" width="16" height="16" viewBox="0 0 16 16"><rect x="2" y="7.200" width="12" height="1.800" fill="#afb1b3"/></svg>
<div style="position:absolute;left:16px;top:600px;width:1694px;height:1px;background:#323232;"></div>
<div style="position:absolute;left:125px;top:598px;width:67px;height:3px;background:#7d8286;"></div>
<div style="position:absolute;left:44px;top:601px;width:1px;height:279px;background:#323232;"></div>
<svg style="position:absolute;left:22px;top:608px;" width="16" height="16" viewBox="0 0 16 16"><g transform="rotate(45 8 8)"><rect x="6.500" y="6" width="3" height="10" rx="1.300" fill="#afb1b3"/><circle cx="8" cy="4.300" r="4.200" fill="#afb1b3"/><rect x="6.400" y="-1" width="3.200" height="5.200" fill="#3c3f41"/></g></svg>
<svg style="position:absolute;left:22px;top:635px;" width="16" height="16" viewBox="0 0 16 16"><g fill="#afb1b3"><rect x="2" y="2" width="4" height="4"/><rect x="8" y="2" width="4" height="4"/><rect x="2" y="8" width="4" height="4"/><rect x="8" y="8" width="4" height="4"/><path d="M10.500 13.500h5L13 16z"/></g></svg>
<svg style="position:absolute;left:22px;top:660px;" width="16" height="16" viewBox="0 0 16 16"><g fill="#afb1b3"><path d="M1.500 1.500h12L9 7.500v6.500L6 12V7.500z"/><path d="M10.500 13.500h5L13 16z"/></g></svg>
<svg style="position:absolute;left:22px;top:686px;" width="16" height="16" viewBox="0 0 16 16"><g fill="#afb1b3"><rect x="2" y="7" width="12" height="2"/><path d="M8 5.300l3.300-3.300H4.700z"/><path d="M8 10.700l3.300 3.300H4.700z"/></g></svg>
<svg style="position:absolute;left:22px;top:712px;" width="16" height="16" viewBox="0 0 16 16"><g fill="#afb1b3"><rect x="2" y="1" width="12" height="2"/><rect x="2" y="13" width="12" height="2"/><path d="M8 3.800l3.300 3H4.700z"/><path d="M8 12.200l3.300-3H4.700z"/></g></svg>
<span id="t100" style="position:absolute;left:53px;top:605.0px;height:18px;line-height:18px;font-size:12px;color:#bbbbbb;white-space:pre;letter-spacing:0.015px;">1个文件共计8个告警</span>
<svg style="position:absolute;left:49px;top:630.5px;" width="16" height="16" viewBox="0 0 16 16"><path d="M5 3.300L10 8L5 12.700" fill="none" stroke="#a4a6a8" stroke-width="1.250"/></svg>
<svg style="position:absolute;left:69px;top:629px;" width="16" height="18" viewBox="0 0 16 18"><path d="M8.500 1.500c2.200 2-2.200 3.200 0 6" fill="none" stroke="#d9643a" stroke-width="1.300"/><path d="M10.800 4c1 1.300-1.200 1.800-0.300 3" fill="none" stroke="#d9643a" stroke-width="0.900"/><path d="M4 9.500h7.500v2a2.500 2.500 0 0 1-2.500 2.500h-2.500a2.500 2.500 0 0 1-2.500-2.500z" fill="#5a8bb8"/><path d="M11.500 10.300h1a1.200 1.200 0 0 1 0 2.400h-1" fill="none" stroke="#5a8bb8" stroke-width="1"/><path d="M2.500 15.300c3 1.600 8 1.600 11 0" fill="none" stroke="#5a8bb8" stroke-width="1.300"/></svg>
<span id="t101" style="position:absolute;left:88px;top:629.5px;height:18px;line-height:18px;font-size:13px;color:#bbbbbb;white-space:pre;letter-spacing:0.048px;">HelloWorld.java</span>
<span id="t102" style="position:absolute;left:187px;top:629.5px;height:18px;line-height:18px;font-size:13px;color:#787a7c;white-space:pre;">8</span>
<span id="t103" style="position:absolute;left:44.7px;top:863.0px;height:18px;line-height:18px;font-size:12px;color:#bbbbbb;white-space:pre;letter-spacing:0.121px;">扫描文件数: 1个, 耗时: 1秒, 检查出: 8个问题, 8个一般问题</span>
<div style="position:absolute;left:877px;top:601px;width:1px;height:279px;background:#323232;"></div>
<span id="t104" style="position:absolute;left:890.5px;top:606.5px;height:18px;line-height:18px;font-size:12px;color:#c4c6c8;white-space:pre;letter-spacing:0.396px;">规则详情</span>
<span id="t105" style="position:absolute;left:965px;top:606.5px;height:18px;line-height:18px;font-size:12px;color:#bbbbbb;white-space:pre;letter-spacing:0.053px;">修复预览</span>
<div style="position:absolute;left:878px;top:629px;width:74px;height:3px;background:#4a88c7;"></div>
<div style="position:absolute;left:878px;top:632px;width:832px;height:1px;background:#323232;"></div>
<span id="t106" style="position:absolute;left:1159px;top:747.5px;height:18px;line-height:18px;font-size:13px;color:#bbbbbb;white-space:pre;letter-spacing:0.105px;">Select an defect to display the rule description</span>
<div style="position:absolute;left:0px;top:880px;width:1723px;height:1px;background:#323232;"></div>
<svg style="position:absolute;left:26px;top:887px;" width="12" height="12" viewBox="0 0 12 12"><g fill="#afb1b3"><rect x="0.500" y="1.500" width="2" height="1.800"/><rect x="3.800" y="1.500" width="7.500" height="1.800"/><rect x="0.500" y="5" width="2" height="1.800"/><rect x="3.800" y="5" width="7.500" height="1.800"/><rect x="0.500" y="8.500" width="2" height="1.800"/><rect x="3.800" y="8.500" width="7.500" height="1.800"/></g></svg>
<span id="t107" style="position:absolute;left:41.9px;top:884.0px;height:18px;line-height:18px;font-size:12px;color:#bbbbbb;white-space:pre;letter-spacing:-0.615px;">TODO</span>
<svg style="position:absolute;left:95px;top:887px;" width="12" height="12" viewBox="0 0 12 12"><circle cx="5.800" cy="6" r="5.300" fill="#afb1b3"/><rect x="5" y="2.800" width="1.600" height="4" fill="#3c3f41"/><rect x="5" y="7.800" width="1.600" height="1.500" fill="#3c3f41"/></svg>
<span id="t108" style="position:absolute;left:111px;top:884.0px;height:18px;line-height:18px;font-size:12px;color:#bbbbbb;white-space:pre;letter-spacing:-0.198px;">Problems</span>
<div style="position:absolute;left:170px;top:881px;width:125px;height:22px;background:#2d2f30;"></div>
<svg style="position:absolute;left:182px;top:886px;" width="15" height="15" viewBox="0 0 15 15"><path d="M7.500 0.800L13.500 3v4.500c0 3.500-3 5.800-6 6.800c-3-1-6-3.300-6-6.800V3z" fill="none" stroke="#4a9ee0" stroke-width="1.300"/><circle cx="7.500" cy="7.500" r="3" fill="#4a9ee0"/></svg>
<span id="t109" style="position:absolute;left:200px;top:884.0px;height:18px;line-height:18px;font-size:12px;color:#e8e8e8;white-space:pre;letter-spacing:-0.294px;">CodeArts Check</span>
<svg style="position:absolute;left:306px;top:887px;" width="13" height="12" viewBox="0 0 13 12"><rect x="0.500" y="0.500" width="12" height="11" fill="#afb1b3"/><path d="M2.500 3L5.500 6L2.500 9" fill="none" stroke="#3c3f41" stroke-width="1.300"/><rect x="6.500" y="8" width="4" height="1.300" fill="#3c3f41"/></svg>
<span id="t110" style="position:absolute;left:323px;top:884.0px;height:18px;line-height:18px;font-size:12px;color:#bbbbbb;white-space:pre;letter-spacing:-0.061px;">Terminal</span>
<svg style="position:absolute;left:388px;top:886px;" width="14" height="14" viewBox="0 0 14 14"><circle cx="6" cy="6.500" r="4.800" fill="none" stroke="#afb1b3" stroke-width="1.400"/><path d="M6 3.500V6.800L4 8" fill="none" stroke="#afb1b3" stroke-width="1.100"/><path d="M7 6.500L13.500 10L7 13.500z" fill="#3c3f41"/><path d="M8.200 8L12 10L8.200 12z" fill="#afb1b3"/></svg>
<span id="t111" style="position:absolute;left:406.3px;top:884.0px;height:18px;line-height:18px;font-size:12px;color:#bbbbbb;white-space:pre;letter-spacing:-0.015px;">Profiler</span>
<svg style="position:absolute;left:463px;top:886px;" width="15" height="14" viewBox="0 0 15 14"><g fill="#afb1b3"><circle cx="7.500" cy="2.800" r="2.300"/><circle cx="2.800" cy="11" r="2.300"/><circle cx="12.200" cy="11" r="2.300"/></g><path d="M7.500 3L3 11M7.500 3L12 11" stroke="#afb1b3" stroke-width="1.300" fill="none"/></svg>
<span id="t112" style="position:absolute;left:481.5px;top:884.0px;height:18px;line-height:18px;font-size:12px;color:#bbbbbb;white-space:pre;letter-spacing:-0.079px;">Endpoints</span>
<svg style="position:absolute;left:555px;top:886px;" width="14" height="14" viewBox="0 0 14 14"><g transform="rotate(-45 7 7)" fill="#afb1b3"><rect x="5.900" y="4" width="2.200" height="10" rx="0.500"/><path d="M2.500 1.500h7.500l1.300 1.800v2h-8.800z"/></g></svg>
<span id="t113" style="position:absolute;left:572px;top:884.0px;height:18px;line-height:18px;font-size:12px;color:#bbbbbb;white-space:pre;letter-spacing:0.114px;">Build</span>
<svg style="position:absolute;left:619px;top:886px;" width="14" height="14" viewBox="0 0 14 14"><path d="M12.500 1c1 5-1 10.500-6.500 10.500c-3 0-5-2-5-4.500c0-3.500 4-4.500 7-4.500c2 0 3.500-0.500 4.500-1.500z" fill="#afb1b3"/><path d="M1 12.500c2-3.500 5-5.500 8.500-6.500" fill="none" stroke="#3c3f41" stroke-width="1"/></svg>
<span id="t114" style="position:absolute;left:636px;top:884.0px;height:18px;line-height:18px;font-size:12px;color:#bbbbbb;white-space:pre;letter-spacing:-0.161px;">Spring</span>
<svg style="position:absolute;left:1630px;top:886px;" width="15" height="14" viewBox="0 0 15 14"><ellipse cx="7" cy="7" rx="7" ry="6.800" fill="#f0a732"/><text x="7" y="10.500" text-anchor="middle" font-family="Liberation Sans,sans-serif" font-size="8.500" font-weight="bold" fill="#3a2a10">9+</text></svg>
<span id="t115" style="position:absolute;left:1648.6px;top:884.0px;height:18px;line-height:18px;font-size:12px;color:#bbbbbb;white-space:pre;letter-spacing:-0.288px;">Event Log</span>
<div style="position:absolute;left:0px;top:902px;width:1723px;height:1px;background:#323232;"></div>
<svg style="position:absolute;left:0px;top:906px;" width="13" height="12" viewBox="0 0 13 12"><rect x="1.500" y="1.500" width="9.500" height="9.500" fill="none" stroke="#afb1b3" stroke-width="1"/><path d="M0 3.500v8.500h8.500" fill="none" stroke="#afb1b3" stroke-width="1"/></svg>
<span id="t116" style="position:absolute;left:21px;top:903.5px;height:18px;line-height:18px;font-size:13px;color:#bbbbbb;white-space:pre;letter-spacing:-0.033px;">Huawei Cloud CodeArts Check: <span style="font-size:12px">自动修复成功</span> (24 minutes ago)</span>
<svg style="position:absolute;left:1492px;top:905px;" width="8" height="15" viewBox="0 0 8 15"><circle cx="4" cy="2.500" r="1.400" fill="none" stroke="#c8cacc" stroke-width="0.900"/><path d="M1.200 5.500h5.600v5H5.800V15H2.200v-4.500H1.200z" fill="none" stroke="#c8cacc" stroke-width="0.900"/></svg>
<span id="t117" style="position:absolute;left:1516.5px;top:903.5px;height:18px;line-height:18px;font-size:13px;color:#bbbbbb;white-space:pre;letter-spacing:-0.477px;">28:35</span>
<span id="t118" style="position:absolute;left:1559px;top:903.5px;height:18px;line-height:18px;font-size:13px;color:#bbbbbb;white-space:pre;letter-spacing:-1.500px;">CRLF</span>
<span id="t119" style="position:absolute;left:1599.5px;top:903.5px;height:18px;line-height:18px;font-size:13px;color:#bbbbbb;white-space:pre;letter-spacing:-0.699px;">UTF-8</span>
<span id="t120" style="position:absolute;left:1645px;top:903.5px;height:18px;line-height:18px;font-size:13px;color:#bbbbbb;white-space:pre;letter-spacing:-0.140px;">4 spaces</span>
<div style="position:absolute;left:1687px;top:906px;width:36px;height:14px;background:rgba(150,152,154,0.45);"></div>
<svg style="position:absolute;left:1704px;top:906px;" width="14" height="14" viewBox="0 0 14 14"><path d="M3 6V4a2.500 2.500 0 0 1 5 0" fill="none" stroke="#d0d2d4" stroke-width="1.300"/><rect x="5.500" y="6" width="8" height="7" fill="#d0d2d4"/></svg></body></html>
